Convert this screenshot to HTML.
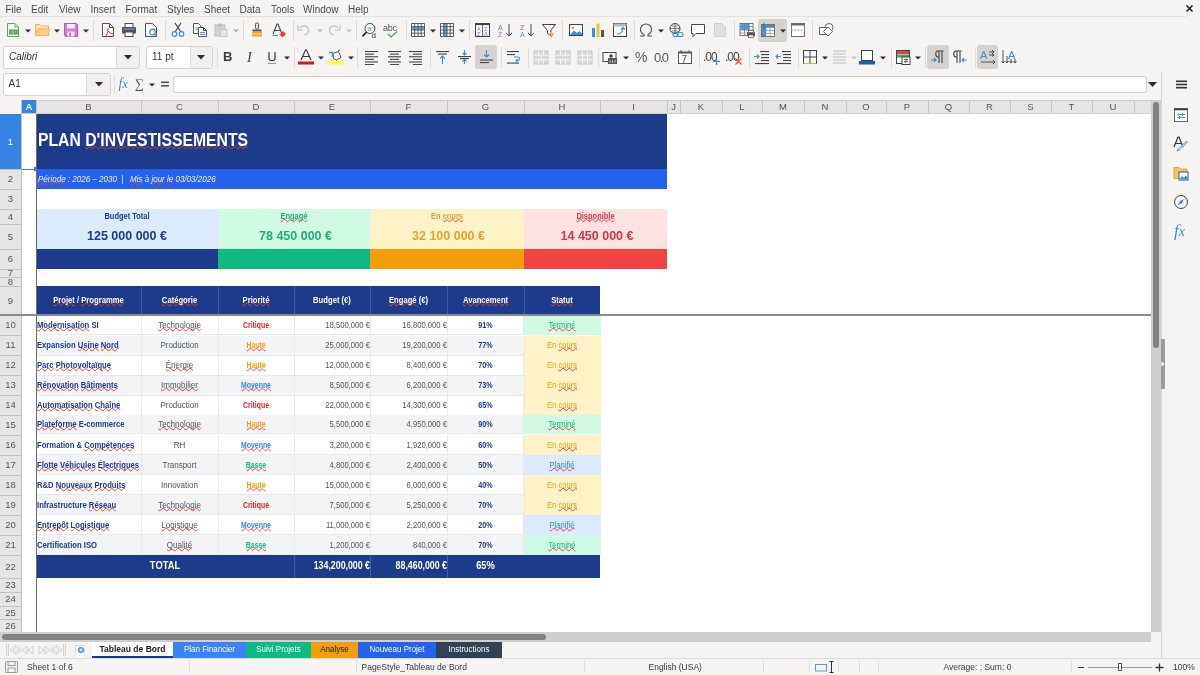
<!DOCTYPE html><html><head><meta charset="utf-8"><style>
html,body{margin:0;padding:0;}
body{width:1200px;height:675px;position:relative;overflow:hidden;background:#f5f4f3;font-family:"Liberation Sans",sans-serif;color:#333;}
div{box-sizing:border-box;}
.mi{position:absolute;top:3px;font-size:10px;color:#4a4a4a;line-height:13px;}
.sep{position:absolute;width:1px;background:#dcdad7;}
.dd{position:absolute;width:0;height:0;border-left:3px solid transparent;border-right:3px solid transparent;border-top:3px solid #2b2b2b;}
.ch{position:absolute;top:100px;height:14px;line-height:14px;font-size:9.5px;color:#505050;text-align:center;border-right:1px solid #c9c8c6;}
.rh{position:absolute;left:0;width:21px;font-size:9.5px;color:#505050;text-align:center;border-bottom:1px solid #c9c8c6;}
.sp{text-decoration-line:underline;text-decoration-style:wavy;text-decoration-color:#e2413e;text-decoration-thickness:1px;text-underline-offset:-0.5px;text-decoration-skip-ink:none;}
.c{position:absolute;white-space:nowrap;overflow:hidden;font-family:"Liberation Sans",sans-serif;}
</style></head><body><div style="position:absolute;left:0;top:0;width:1200px;height:675px;overflow:hidden;will-change:transform">

<div class="mi" style="left:5.5px">File</div>
<div class="mi" style="left:31px">Edit</div>
<div class="mi" style="left:59px">View</div>
<div class="mi" style="left:90.5px">Insert</div>
<div class="mi" style="left:125.5px">Format</div>
<div class="mi" style="left:167px">Styles</div>
<div class="mi" style="left:204px">Sheet</div>
<div class="mi" style="left:239.5px">Data</div>
<div class="mi" style="left:271px">Tools</div>
<div class="mi" style="left:303px">Window</div>
<div class="mi" style="left:348px">Help</div>
<div style="position:absolute;left:0px;top:16px;width:1186px;height:1px;background:#e4e2df"></div>
<svg style="position:absolute;left:1184.5px;top:4px;" width="9" height="9" viewBox="0 0 9 9"><path d="M1.5 1.5L7.5 7.5M7.5 1.5L1.5 7.5" stroke="#222" stroke-width="1.6"/></svg>
<svg style="position:absolute;left:5px;top:22px;" width="16" height="16" viewBox="0 0 16 16"><path d="M2.5 1.5H10L13.5 5V14.5H2.5Z" fill="#fff" stroke="#5aa866"/><path d="M10 1.5V5H13.5" fill="none" stroke="#5aa866"/><rect x="4" y="7.5" width="9" height="5" fill="#4c9e58"/><path d="M4 10H13M8 7.5V12.5" stroke="#b7e0bc" stroke-width="0.7"/></svg>
<svg style="position:absolute;left:24.5px;top:29px;" width="6" height="4" viewBox="0 0 6 4"><path d="M0 0.5H6L3 3.5Z" fill="#2b2b2b"/></svg>
<svg style="position:absolute;left:33.5px;top:22px;" width="16" height="16" viewBox="0 0 16 16"><path d="M1.5 2.5H6L7.5 4H14.5V13.5H1.5Z" fill="#fbe3b3" stroke="#eab06a"/><path d="M1.5 13.5L3.5 7H15.5L14.5 13.5Z" fill="#f8cf80" stroke="#eab06a" stroke-width="0.9"/></svg>
<svg style="position:absolute;left:54px;top:29px;" width="6" height="4" viewBox="0 0 6 4"><path d="M0 0.5H6L3 3.5Z" fill="#2b2b2b"/></svg>
<svg style="position:absolute;left:63px;top:22px;" width="16" height="16" viewBox="0 0 16 16"><path d="M1.5 1.5H13.5L14.5 2.5V14.5H2.5L1.5 13.5Z" fill="#d57ad5" stroke="#b45ab4"/><rect x="4" y="2" width="8" height="4.5" fill="#f8ecf8"/><rect x="4.5" y="9.5" width="7" height="5" fill="#f8ecf8"/><rect x="6.5" y="10.5" width="1.5" height="4" fill="#b45ab4"/></svg>
<svg style="position:absolute;left:83px;top:29px;" width="6" height="4" viewBox="0 0 6 4"><path d="M0 0.5H6L3 3.5Z" fill="#2b2b2b"/></svg>
<div style="position:absolute;left:93px;top:20px;width:1px;height:21px;background:#dedcd9"></div>
<svg style="position:absolute;left:100px;top:22px;" width="16" height="16" viewBox="0 0 16 16"><path d="M2.5 1.5H9.5L13.5 5.5V14.5H2.5Z" fill="#fff" stroke="#555"/><path d="M9.5 1.5V5.5H13.5" fill="none" stroke="#555"/><path d="M6 14C8 10 9 8 8 7C7 8 9 11 13 12" fill="none" stroke="#e0443e" stroke-width="1.1"/></svg>
<svg style="position:absolute;left:121px;top:22px;" width="16" height="16" viewBox="0 0 16 16"><rect x="4" y="1.5" width="8" height="4" fill="#fff" stroke="#4a4a4a"/><rect x="1" y="5" width="14" height="6.5" rx="1" fill="#4a5560"/><rect x="4" y="10" width="8" height="4.5" fill="#fff" stroke="#4a4a4a"/><rect x="2.5" y="6.5" width="11" height="1" fill="#6fa8dc"/></svg>
<svg style="position:absolute;left:143px;top:22px;" width="16" height="16" viewBox="0 0 16 16"><path d="M2.5 1.5H9.5L13.5 5.5V14.5H2.5Z" fill="#fff" stroke="#555"/><circle cx="9.5" cy="10" r="2.8" fill="none" stroke="#3a8fd8" stroke-width="1.2"/><path d="M11.5 12L14 14.5" stroke="#3a8fd8" stroke-width="1.4"/></svg>
<div style="position:absolute;left:164.5px;top:20px;width:1px;height:21px;background:#dedcd9"></div>
<svg style="position:absolute;left:170px;top:22px;" width="16" height="16" viewBox="0 0 16 16"><path d="M5 1L11 10M11 1L5 10" stroke="#444" stroke-width="1.2"/><circle cx="4.5" cy="12" r="2.3" fill="none" stroke="#3a8fd8" stroke-width="1.2"/><circle cx="11.5" cy="12" r="2.3" fill="none" stroke="#3a8fd8" stroke-width="1.2"/></svg>
<svg style="position:absolute;left:192px;top:22px;" width="16" height="16" viewBox="0 0 16 16"><path d="M1.5 1.5H6.5L8.5 3.5V11.5H1.5Z" fill="#fff" stroke="#555"/><path d="M3 6H7M3 8H7" stroke="#3a8fd8" stroke-width="0.8"/><path d="M6.5 5.5H11.5L14.5 8.5V14.5H6.5Z" fill="#fff" stroke="#555"/><path d="M11.5 5.5V8.5H14.5" fill="none" stroke="#555"/><path d="M8 10.5H13M8 12.5H13" stroke="#3a8fd8" stroke-width="0.9"/></svg>
<svg style="position:absolute;left:213px;top:22px;" width="16" height="16" viewBox="0 0 16 16"><rect x="2" y="3" width="10" height="11" fill="#d2d2d2" stroke="#bdbdbd"/><rect x="5" y="1.5" width="4" height="3" fill="#bdbdbd"/><rect x="7.5" y="7.5" width="6.5" height="7" fill="#e6e6e6" stroke="#c4c4c4"/></svg>
<svg style="position:absolute;left:233px;top:29px;" width="6" height="4" viewBox="0 0 6 4"><path d="M0 0.5H6L3 3.5Z" fill="#b0b0b0"/></svg>
<div style="position:absolute;left:243px;top:20px;width:1px;height:21px;background:#dedcd9"></div>
<svg style="position:absolute;left:249px;top:22px;" width="16" height="16" viewBox="0 0 16 16"><rect x="6.5" y="1" width="3" height="6" rx="1.2" fill="none" stroke="#555"/><path d="M3.5 7.5H12.5V9.5H3.5Z" fill="#555"/><path d="M3 9.5H13V14.5H3Z" fill="#f0a23c"/><path d="M3 12H13" stroke="#fff" stroke-width="0.6"/></svg>
<svg style="position:absolute;left:271px;top:22px;" width="16" height="16" viewBox="0 0 16 16"><path d="M2 12L6 2H7L11 12M3.5 8.5H9.5" fill="none" stroke="#444" stroke-width="1.1"/><path d="M1.5 13.5H7" stroke="#3a8fd8"/><path d="M8.5 12.5L12 9L15 12L11.5 15.5Z" fill="#e0443e"/></svg>
<div style="position:absolute;left:292.5px;top:20px;width:1px;height:21px;background:#dedcd9"></div>
<svg style="position:absolute;left:296px;top:22px;" width="16" height="16" viewBox="0 0 16 16"><path d="M4 6C6 3 11 3 12.5 7C13.5 10 11 13 8 13" fill="none" stroke="#c2c2c2" stroke-width="1.2"/><path d="M2 3V8H7" fill="none" stroke="#c2c2c2" stroke-width="1.2"/></svg>
<svg style="position:absolute;left:316.5px;top:29px;" width="6" height="4" viewBox="0 0 6 4"><path d="M0 0.5H6L3 3.5Z" fill="#c2c2c2"/></svg>
<svg style="position:absolute;left:326px;top:22px;" width="16" height="16" viewBox="0 0 16 16"><path d="M12 6C10 3 5 3 3.5 7C2.5 10 5 13 8 13" fill="none" stroke="#c2c2c2" stroke-width="1.2"/><path d="M14 3V8H9" fill="none" stroke="#c2c2c2" stroke-width="1.2"/></svg>
<svg style="position:absolute;left:345.5px;top:29px;" width="6" height="4" viewBox="0 0 6 4"><path d="M0 0.5H6L3 3.5Z" fill="#c2c2c2"/></svg>
<div style="position:absolute;left:356px;top:20px;width:1px;height:21px;background:#dedcd9"></div>
<svg style="position:absolute;left:361px;top:22px;" width="16" height="16" viewBox="0 0 16 16"><circle cx="9" cy="6.5" r="5" fill="#fff" stroke="#444" stroke-width="1"/><path d="M5.5 10L1.5 14.5" stroke="#222" stroke-width="1.7"/><text x="6.3" y="9" font-size="7.5" fill="#3a8fd8" font-family="Liberation Sans">a</text><text x="10.5" y="16" font-size="8" fill="#333" font-family="Liberation Sans">d</text></svg>
<svg style="position:absolute;left:383px;top:22px;" width="18" height="16" viewBox="0 0 18 16"><text x="0" y="8.5" font-size="9" fill="#555" font-family="Liberation Sans" letter-spacing="-0.3">abc</text><path d="M5 12L8 15L14 9.5" fill="none" stroke="#3daa5c" stroke-width="1.2"/></svg>
<div style="position:absolute;left:405.5px;top:20px;width:1px;height:21px;background:#dedcd9"></div>
<svg style="position:absolute;left:410px;top:22px;" width="16" height="16" viewBox="0 0 16 16"><rect x="1.5" y="1.5" width="13" height="13" fill="#fff"/><rect x="1.5" y="4.7" width="13" height="3.3" fill="#5ab0f0"/><path d="M1.5 1.5H14.5V14.5H1.5ZM1.5 4.7H14.5M1.5 8H14.5M1.5 11.2H14.5M4.7 1.5V14.5M8 1.5V14.5M11.2 1.5V14.5" fill="none" stroke="#4a4a4a" stroke-width="0.9"/></svg>
<svg style="position:absolute;left:429.5px;top:29px;" width="6" height="4" viewBox="0 0 6 4"><path d="M0 0.5H6L3 3.5Z" fill="#2b2b2b"/></svg>
<svg style="position:absolute;left:439px;top:22px;" width="16" height="16" viewBox="0 0 16 16"><rect x="1.5" y="1.5" width="13" height="13" fill="#fff"/><rect x="4.7" y="1.5" width="3.3" height="13" fill="#5ab0f0"/><path d="M1.5 1.5H14.5V14.5H1.5ZM1.5 4.7H14.5M1.5 8H14.5M1.5 11.2H14.5M4.7 1.5V14.5M8 1.5V14.5M11.2 1.5V14.5" fill="none" stroke="#4a4a4a" stroke-width="0.9"/></svg>
<svg style="position:absolute;left:459px;top:29px;" width="6" height="4" viewBox="0 0 6 4"><path d="M0 0.5H6L3 3.5Z" fill="#2b2b2b"/></svg>
<div style="position:absolute;left:469px;top:20px;width:1px;height:21px;background:#dedcd9"></div>
<svg style="position:absolute;left:474px;top:22px;" width="16" height="16" viewBox="0 0 16 16"><rect x="1.5" y="1.5" width="14" height="13" fill="#fff" stroke="#444"/><rect x="1.5" y="1.5" width="14" height="1.6" fill="#444"/><path d="M8.5 3V14.5" stroke="#444" stroke-width="0.8"/><text x="3" y="8.5" font-size="5.5" fill="#3a8fd8" font-family="Liberation Sans">A</text><text x="3" y="14" font-size="5.5" fill="#c44fc4" font-family="Liberation Sans">Z</text><text x="10" y="8.5" font-size="5.5" fill="#c44fc4" font-family="Liberation Sans">Z</text><text x="10" y="14" font-size="5.5" fill="#3a8fd8" font-family="Liberation Sans">A</text></svg>
<svg style="position:absolute;left:497px;top:22px;" width="16" height="16" viewBox="0 0 16 16"><text x="1" y="7.5" font-size="7" fill="#3a8fd8" font-family="Liberation Sans">A</text><text x="1" y="15" font-size="7" fill="#c44fc4" font-family="Liberation Sans">Z</text><path d="M12 2V14M9 11L12 14L15 11" fill="none" stroke="#444" stroke-width="1"/></svg>
<svg style="position:absolute;left:519px;top:22px;" width="16" height="16" viewBox="0 0 16 16"><text x="1" y="7.5" font-size="7" fill="#c44fc4" font-family="Liberation Sans">Z</text><text x="1" y="15" font-size="7" fill="#3a8fd8" font-family="Liberation Sans">A</text><path d="M12 2V14M9 11L12 14L15 11" fill="none" stroke="#444" stroke-width="1"/></svg>
<svg style="position:absolute;left:541px;top:22px;" width="16" height="16" viewBox="0 0 16 16"><path d="M1.5 2.5H14.5L9.5 8.5V13.5L6.5 11.5V8.5Z" fill="#fff" stroke="#444"/><path d="M11 8L9 12H12L10 15.5" fill="none" stroke="#f0a23c" stroke-width="1.4"/></svg>
<div style="position:absolute;left:562px;top:20px;width:1px;height:21px;background:#dedcd9"></div>
<svg style="position:absolute;left:568px;top:22px;" width="16" height="16" viewBox="0 0 16 16"><rect x="1.5" y="2.5" width="13" height="11" fill="#fff" stroke="#444"/><circle cx="5" cy="6" r="1.3" fill="#f0a23c"/><path d="M2 13L6 8.5L9 11L11.5 9L14 11.5V13Z" fill="#3a8fd8"/></svg>
<svg style="position:absolute;left:590px;top:22px;" width="16" height="16" viewBox="0 0 16 16"><rect x="2" y="6" width="3" height="9" fill="#3a8fd8"/><rect x="6.5" y="1.5" width="3" height="13.5" fill="#f0c23c"/><rect x="11" y="8" width="3" height="7" fill="#555"/></svg>
<svg style="position:absolute;left:612px;top:22px;" width="16" height="16" viewBox="0 0 16 16"><rect x="1.5" y="1.5" width="13" height="13" fill="#fff" stroke="#444"/><rect x="1.5" y="1.5" width="13" height="3" fill="#bbb"/><path d="M5 12C8 12 11 10 11 6M9 7.5L11 5.5L13 7.5" fill="none" stroke="#3a8fd8" stroke-width="1.1"/></svg>
<div style="position:absolute;left:633.5px;top:20px;width:1px;height:21px;background:#dedcd9"></div>
<svg style="position:absolute;left:638px;top:22px;" width="16" height="16" viewBox="0 0 16 16"><path d="M2 14H6V12.5C3.5 11.5 2.5 9.5 2.5 7.5C2.5 4.5 5 2 8 2C11 2 13.5 4.5 13.5 7.5C13.5 9.5 12.5 11.5 10 12.5V14H14" fill="none" stroke="#444" stroke-width="1.1"/></svg>
<svg style="position:absolute;left:658px;top:29px;" width="6" height="4" viewBox="0 0 6 4"><path d="M0 0.5H6L3 3.5Z" fill="#2b2b2b"/></svg>
<svg style="position:absolute;left:668px;top:22px;" width="16" height="16" viewBox="0 0 16 16"><circle cx="7" cy="6.5" r="5" fill="#fff" stroke="#444"/><path d="M2 6.5H12M7 1.5V11.5M3.5 3.5C5 4.5 9 4.5 10.5 3.5M3.5 9.5C5 8.5 9 8.5 10.5 9.5" fill="none" stroke="#444" stroke-width="0.7"/><rect x="5" y="10.5" width="5" height="4" rx="2" fill="none" stroke="#3a8fd8" stroke-width="1.1"/><rect x="9.5" y="10.5" width="5.5" height="4" rx="2" fill="none" stroke="#3a8fd8" stroke-width="1.1"/></svg>
<svg style="position:absolute;left:690px;top:22px;" width="16" height="16" viewBox="0 0 16 16"><path d="M1.5 2.5H14.5V11.5H6L3 14.5V11.5H1.5Z" fill="#fff" stroke="#444"/></svg>
<svg style="position:absolute;left:712px;top:22px;" width="16" height="16" viewBox="0 0 16 16"><path d="M2.5 1.5H10L13.5 5V14.5H2.5Z" fill="#e0e0e0" stroke="#cfcfcf"/></svg>
<div style="position:absolute;left:734px;top:20px;width:1px;height:21px;background:#dedcd9"></div>
<svg style="position:absolute;left:739px;top:22px;" width="16" height="16" viewBox="0 0 16 16"><rect x="1" y="1.5" width="13" height="12" fill="#fff" stroke="#666" stroke-width="0.9"/><rect x="1.5" y="2" width="9" height="6" fill="#4a9fe8"/><path d="M1 4.5H14M1 8H14M1 11H14M5.5 1.5V13.5M10 1.5V13.5" stroke="#777" stroke-width="0.7"/><rect x="8" y="10" width="8" height="4.5" rx="1" fill="#555"/><rect x="9.5" y="8.5" width="5" height="2" fill="#fff" stroke="#555" stroke-width="0.7"/><rect x="9.5" y="13" width="5" height="2.5" fill="#fff" stroke="#555" stroke-width="0.7"/></svg>
<div style="position:absolute;left:758px;top:19px;width:29px;height:23px;background:#d6d3cf;border-radius:3px"></div>
<svg style="position:absolute;left:760px;top:22px;" width="16" height="16" viewBox="0 0 16 16"><rect x="1.5" y="2.5" width="13" height="12" fill="#fff" stroke="#666" stroke-width="0.9"/><rect x="2" y="3" width="4" height="11" fill="#3a8fd8"/><rect x="2" y="3" width="12" height="2.5" fill="#3a8fd8"/><path d="M1.5 5.5H14.5M1.5 8.5H14.5M1.5 11.5H14.5M6 2.5V14.5M10 2.5V14.5" stroke="#888" stroke-width="0.7"/><path d="M4 0.5V6M2.5 4.5L4 6L5.5 4.5" fill="none" stroke="#2a6fb8" stroke-width="0.9"/></svg>
<svg style="position:absolute;left:780px;top:29px;" width="6" height="4" viewBox="0 0 6 4"><path d="M0 0.5H6L3 3.5Z" fill="#2b2b2b"/></svg>
<svg style="position:absolute;left:790px;top:22px;" width="16" height="16" viewBox="0 0 16 16"><rect x="1.5" y="1.5" width="13" height="13" fill="#fff" stroke="#666" stroke-width="0.9"/><rect x="1.5" y="1.5" width="13" height="2" fill="#666"/><path d="M1 8H15" stroke="#4aa0e0" stroke-width="0.9" stroke-dasharray="2 1.2"/></svg>
<div style="position:absolute;left:812px;top:20px;width:1px;height:21px;background:#dedcd9"></div>
<svg style="position:absolute;left:818px;top:22px;" width="16" height="16" viewBox="0 0 16 16"><circle cx="11" cy="5.5" r="4" fill="#fff" stroke="#555" stroke-width="0.9"/><path d="M1.5 5.5H8.5V12.5H1.5Z" fill="#fff" stroke="#555" stroke-width="0.9"/><path d="M5.5 9.5L10 5L14.5 9.5L10 14Z" fill="#fff" stroke="#555" stroke-width="0.9"/></svg>
<div style="position:absolute;left:3px;top:45.5px;width:137px;height:23px;background:#fff;border:1px solid #d5d3d0;border-radius:3px"></div>
<div style="position:absolute;left:116px;top:46.5px;width:23px;height:21px;background:#f1f0ee;border-left:1px solid #dedcd9;border-radius:0 2px 2px 0"></div>
<svg style="position:absolute;left:124px;top:55px;" width="8" height="5" viewBox="0 0 8 5"><path d="M0 0H8L4 4.5Z" fill="#2b2b2b"/></svg>
<div style="position:absolute;left:9px;top:50px;white-space:nowrap;font-size:10px;font-style:italic;color:#333;line-height:14px;">Calibri</div>
<div style="position:absolute;left:146px;top:45.5px;width:67px;height:23px;background:#fff;border:1px solid #d5d3d0;border-radius:3px"></div>
<div style="position:absolute;left:190px;top:46.5px;width:22px;height:21px;background:#f1f0ee;border-left:1px solid #dedcd9;border-radius:0 2px 2px 0"></div>
<svg style="position:absolute;left:197px;top:55px;" width="8" height="5" viewBox="0 0 8 5"><path d="M0 0H8L4 4.5Z" fill="#2b2b2b"/></svg>
<div style="position:absolute;left:152px;top:50px;white-space:nowrap;font-size:10px;color:#333;line-height:14px;">11 pt</div>
<div style="position:absolute;left:217px;top:47px;width:1px;height:21px;background:#dedcd9"></div>
<div style="position:absolute;left:223px;top:49px;white-space:nowrap;font-size:13px;font-weight:bold;color:#3a3a3a;line-height:16px;">B</div>
<div style="position:absolute;left:247px;top:48px;white-space:nowrap;font-size:14.5px;font-style:italic;color:#444;line-height:18px;font-family:Liberation Serif;">I</div>
<svg style="position:absolute;left:266px;top:49px;" width="12" height="16" viewBox="0 0 12 16"><path d="M3 3V9.5C3 12.3 9 12.3 9 9.5V3" fill="none" stroke="#3a3a3a" stroke-width="1.2"/><path d="M2 14.5H10" stroke="#6aa8e0" stroke-width="1.2"/></svg>
<svg style="position:absolute;left:284px;top:56px;" width="6" height="4" viewBox="0 0 6 4"><path d="M0 0.5H6L3 3.5Z" fill="#2b2b2b"/></svg>
<div style="position:absolute;left:294px;top:47px;width:1px;height:21px;background:#dedcd9"></div>
<svg style="position:absolute;left:298px;top:49px;" width="16" height="16" viewBox="0 0 16 16"><path d="M3 11L7.5 1H8.5L13 11M4.8 7.5H11.2" fill="none" stroke="#3a3a3a" stroke-width="1.2"/><rect x="0" y="12.5" width="16" height="3" fill="#c9211e"/></svg>
<svg style="position:absolute;left:318px;top:56px;" width="6" height="4" viewBox="0 0 6 4"><path d="M0 0.5H6L3 3.5Z" fill="#2b2b2b"/></svg>
<svg style="position:absolute;left:327px;top:49px;" width="16" height="16" viewBox="0 0 16 16"><path d="M6 4.5L11.5 2.5L14 8.5L9.5 11L6.5 9.5Z" fill="#fff" stroke="#444" stroke-width="0.9"/><path d="M11 2.5C11 1 12.5 0.5 13 2" fill="none" stroke="#444" stroke-width="0.8"/><path d="M2 3.5H5.5V8" fill="none" stroke="#3a8fd8" stroke-width="1.6"/><rect x="0" y="12" width="16" height="3.5" fill="#ffff38"/></svg>
<svg style="position:absolute;left:347.5px;top:56px;" width="6" height="4" viewBox="0 0 6 4"><path d="M0 0.5H6L3 3.5Z" fill="#2b2b2b"/></svg>
<div style="position:absolute;left:357px;top:47px;width:1px;height:21px;background:#dedcd9"></div>
<svg style="position:absolute;left:364px;top:49px;" width="16" height="16" viewBox="0 0 16 16"><rect x="1" y="2.0" width="13" height="1.1" fill="#444"/><rect x="1" y="4.6" width="9" height="1.1" fill="#444"/><rect x="1" y="7.2" width="13" height="1.1" fill="#444"/><rect x="1" y="9.8" width="9" height="1.1" fill="#444"/><rect x="1" y="12.4" width="13" height="1.1" fill="#444"/><rect x="1" y="15.0" width="9" height="1.1" fill="#444"/></svg>
<svg style="position:absolute;left:386.5px;top:49px;" width="16" height="16" viewBox="0 0 16 16"><rect x="1" y="2.0" width="13" height="1.1" fill="#444"/><rect x="3" y="4.6" width="9" height="1.1" fill="#444"/><rect x="1" y="7.2" width="13" height="1.1" fill="#444"/><rect x="3" y="9.8" width="9" height="1.1" fill="#444"/><rect x="1" y="12.4" width="13" height="1.1" fill="#444"/><rect x="3" y="15.0" width="9" height="1.1" fill="#444"/></svg>
<svg style="position:absolute;left:408px;top:49px;" width="16" height="16" viewBox="0 0 16 16"><rect x="1" y="2.0" width="13" height="1.1" fill="#444"/><rect x="5" y="4.6" width="9" height="1.1" fill="#444"/><rect x="1" y="7.2" width="13" height="1.1" fill="#444"/><rect x="5" y="9.8" width="9" height="1.1" fill="#444"/><rect x="1" y="12.4" width="13" height="1.1" fill="#444"/><rect x="5" y="15.0" width="9" height="1.1" fill="#444"/></svg>
<div style="position:absolute;left:430px;top:47px;width:1px;height:21px;background:#dedcd9"></div>
<svg style="position:absolute;left:435px;top:49px;" width="16" height="16" viewBox="0 0 16 16"><rect x="1" y="2" width="13" height="1.1" fill="#444"/><rect x="3" y="4.5" width="9" height="1.1" fill="#444"/><path d="M7.5 15V7M5 9.5L7.5 7L10 9.5" fill="none" stroke="#3a8fd8" stroke-width="1.1"/></svg>
<svg style="position:absolute;left:457px;top:49px;" width="16" height="16" viewBox="0 0 16 16"><rect x="1" y="7" width="13" height="1.1" fill="#444"/><rect x="3" y="9" width="9" height="1.1" fill="#444"/><path d="M7.5 1V6M5.5 4L7.5 6L9.5 4M7.5 15V10.5M5.5 12.5L7.5 10.5L9.5 12.5" fill="none" stroke="#3a8fd8" stroke-width="1.1"/></svg>
<div style="position:absolute;left:475px;top:45px;width:22px;height:24px;background:#d6d3cf;border-radius:3px"></div>
<svg style="position:absolute;left:479px;top:49px;" width="16" height="16" viewBox="0 0 16 16"><path d="M7.5 1V8M5 5.5L7.5 8L10 5.5" fill="none" stroke="#3a8fd8" stroke-width="1.1"/><rect x="1" y="10.5" width="13" height="1.1" fill="#444"/><rect x="1" y="13" width="9" height="1.1" fill="#444"/></svg>
<div style="position:absolute;left:500.5px;top:47px;width:1px;height:21px;background:#dedcd9"></div>
<svg style="position:absolute;left:506px;top:49px;" width="16" height="16" viewBox="0 0 16 16"><rect x="1" y="2" width="12" height="1.1" fill="#444"/><rect x="1" y="5" width="8" height="1.1" fill="#444"/><rect x="1" y="13.5" width="12" height="1.1" fill="#444"/><path d="M8 8H12C14 8 14 11.5 12 11.5H10M11.5 10L10 11.5L11.5 13" fill="none" stroke="#3a8fd8" stroke-width="1.1"/></svg>
<div style="position:absolute;left:528px;top:47px;width:1px;height:21px;background:#dedcd9"></div>
<svg style="position:absolute;left:533px;top:49px;" width="16" height="16" viewBox="0 0 16 16"><rect x="1" y="2" width="14" height="13" fill="#dadada" stroke="#c6c6c6"/><path d="M1 6.3H15M1 10.6H15" stroke="#f6f6f6" stroke-width="1"/><path d="M5.5 2V6.3M10.5 2V6.3M5.5 10.6V15M10.5 10.6V15M8 6.3V10.6" stroke="#f6f6f6"/></svg>
<svg style="position:absolute;left:555px;top:49px;" width="16" height="16" viewBox="0 0 16 16"><rect x="1" y="2" width="14" height="13" fill="#dadada" stroke="#c6c6c6"/><path d="M1 6.3H15M1 10.6H15" stroke="#f6f6f6" stroke-width="1"/><path d="M5.5 2V6.3M10.5 2V6.3M5.5 10.6V15M10.5 10.6V15" stroke="#f6f6f6"/></svg>
<svg style="position:absolute;left:577px;top:49px;" width="16" height="16" viewBox="0 0 16 16"><rect x="1" y="2" width="14" height="13" fill="#dadada" stroke="#c6c6c6"/><path d="M1 6.3H15M1 10.6H15" stroke="#f6f6f6" stroke-width="1"/><path d="M5.5 2V15M10.5 2V15" stroke="#f6f6f6"/></svg>
<div style="position:absolute;left:598px;top:47px;width:1px;height:21px;background:#dedcd9"></div>
<svg style="position:absolute;left:602px;top:49px;" width="16" height="16" viewBox="0 0 16 16"><rect x="1" y="3.5" width="13" height="9" fill="#fff" stroke="#444"/><circle cx="9" cy="7" r="1.8" fill="#444"/><rect x="6" y="9" width="9" height="6" fill="#555"/><path d="M8 11V14M10.5 11V14M13 11V14" stroke="#ddd" stroke-width="0.8"/></svg>
<svg style="position:absolute;left:623px;top:56px;" width="6" height="4" viewBox="0 0 6 4"><path d="M0 0.5H6L3 3.5Z" fill="#2b2b2b"/></svg>
<div style="position:absolute;left:635px;top:48px;white-space:nowrap;font-size:14px;color:#5a5a5a;line-height:18px;">%</div>
<div style="position:absolute;left:654px;top:48.5px;white-space:nowrap;font-size:13px;color:#5a5a5a;line-height:17px;letter-spacing:-1.5px;">0.0</div>
<svg style="position:absolute;left:677px;top:49px;" width="16" height="16" viewBox="0 0 16 16"><rect x="1.5" y="3" width="13" height="11.5" fill="#fff" stroke="#555"/><rect x="1.5" y="3" width="13" height="1.5" fill="#555"/><path d="M4 1V4M12 1V4" stroke="#555"/><text x="4.5" y="13.5" font-size="10" fill="#555" font-family="Liberation Sans">7</text></svg>
<div style="position:absolute;left:699px;top:47px;width:1px;height:21px;background:#dedcd9"></div>
<div style="position:absolute;left:703px;top:49px;white-space:nowrap;font-size:12px;color:#444;line-height:16px;letter-spacing:-1px;">.00</div>
<svg style="position:absolute;left:712px;top:57px;" width="9" height="9" viewBox="0 0 9 9"><path d="M4.5 1V8M1 4.5H8" stroke="#3a8fd8" stroke-width="1.2"/></svg>
<div style="position:absolute;left:725px;top:49px;white-space:nowrap;font-size:12px;color:#444;line-height:16px;letter-spacing:-1px;">.00</div>
<svg style="position:absolute;left:734px;top:57px;" width="9" height="9" viewBox="0 0 9 9"><path d="M1.5 1.5L7.5 7.5M7.5 1.5L1.5 7.5" stroke="#e0443e" stroke-width="1.1"/></svg>
<div style="position:absolute;left:748.5px;top:47px;width:1px;height:21px;background:#dedcd9"></div>
<svg style="position:absolute;left:753px;top:49px;" width="16" height="16" viewBox="0 0 16 16"><rect x="7" y="2" width="9" height="1.1" fill="#444"/><rect x="8" y="5" width="8" height="1.1" fill="#444"/><rect x="8" y="8" width="8" height="1.1" fill="#444"/><rect x="8" y="11" width="8" height="1.1" fill="#444"/><rect x="2" y="14" width="14" height="1.1" fill="#444"/><path d="M1 7.5H6M4 5.5L6 7.5L4 9.5" fill="none" stroke="#3a8fd8" stroke-width="1.1"/></svg>
<svg style="position:absolute;left:775px;top:49px;" width="16" height="16" viewBox="0 0 16 16"><rect x="7" y="2" width="9" height="1.1" fill="#444"/><rect x="8" y="5" width="8" height="1.1" fill="#444"/><rect x="8" y="8" width="8" height="1.1" fill="#444"/><rect x="8" y="11" width="8" height="1.1" fill="#444"/><rect x="2" y="14" width="14" height="1.1" fill="#444"/><path d="M1 7.5H6M3 5.5L1 7.5L3 9.5" fill="none" stroke="#3a8fd8" stroke-width="1.1"/></svg>
<div style="position:absolute;left:798px;top:47px;width:1px;height:21px;background:#dedcd9"></div>
<svg style="position:absolute;left:802px;top:49px;" width="16" height="16" viewBox="0 0 16 16"><rect x="1.5" y="1.5" width="13" height="13" fill="#fff" stroke="#444"/><path d="M8 1.5V14.5M1.5 8H14.5" stroke="#444"/><path d="M1.5 14.5H14.5" stroke="#f0a23c"/></svg>
<svg style="position:absolute;left:822px;top:56px;" width="6" height="4" viewBox="0 0 6 4"><path d="M0 0.5H6L3 3.5Z" fill="#2b2b2b"/></svg>
<svg style="position:absolute;left:832px;top:49px;" width="16" height="16" viewBox="0 0 16 16"><path d="M1 2H14M1 5H14M1 8H14M1 11H14M1 14H14" stroke="#bbb" stroke-width="1.2"/></svg>
<svg style="position:absolute;left:851px;top:56px;" width="6" height="4" viewBox="0 0 6 4"><path d="M0 0.5H6L3 3.5Z" fill="#c2c2c2"/></svg>
<svg style="position:absolute;left:859px;top:49px;" width="16" height="16" viewBox="0 0 16 16"><rect x="2.5" y="1.5" width="11" height="10" fill="#fff" stroke="#444"/><rect x="0" y="12" width="16" height="3.5" fill="#1e60b0"/></svg>
<svg style="position:absolute;left:880px;top:56px;" width="6" height="4" viewBox="0 0 6 4"><path d="M0 0.5H6L3 3.5Z" fill="#2b2b2b"/></svg>
<div style="position:absolute;left:891px;top:47px;width:1px;height:21px;background:#dedcd9"></div>
<svg style="position:absolute;left:895px;top:49px;" width="16" height="16" viewBox="0 0 16 16"><rect x="1.5" y="1.5" width="13" height="13" fill="#fff" stroke="#444"/><rect x="2" y="2" width="12" height="3" fill="#e0443e"/><rect x="2" y="5.5" width="12" height="3" fill="#3daa5c"/><rect x="7" y="8" width="8" height="7.5" fill="#fff" stroke="#444"/><path d="M9 10.5H13M9 12.5H13M12 9.5L10 14" stroke="#444" stroke-width="0.8"/></svg>
<svg style="position:absolute;left:915px;top:56px;" width="6" height="4" viewBox="0 0 6 4"><path d="M0 0.5H6L3 3.5Z" fill="#2b2b2b"/></svg>
<div style="position:absolute;left:925px;top:47px;width:1px;height:21px;background:#dedcd9"></div>
<div style="position:absolute;left:927px;top:45px;width:22px;height:24px;background:#d6d3cf;border-radius:3px"></div>
<svg style="position:absolute;left:930px;top:49px;" width="16" height="16" viewBox="0 0 16 16"><path d="M9 14V2M12 14V2M13.5 2H8C5 2 5 8 8 8H9" fill="none" stroke="#444" stroke-width="1.1"/><path d="M1 11H6M4 9L6 11L4 13" fill="none" stroke="#3a8fd8" stroke-width="1.1"/></svg>
<svg style="position:absolute;left:952px;top:49px;" width="16" height="16" viewBox="0 0 16 16"><path d="M5 14V2M8 14V2M9.5 2H4C1 2 1 8 4 8H5" fill="none" stroke="#444" stroke-width="1.1"/><path d="M10 11H15M12 9L10 11L12 13" fill="none" stroke="#3a8fd8" stroke-width="1.1"/></svg>
<div style="position:absolute;left:974.5px;top:47px;width:1px;height:21px;background:#dedcd9"></div>
<div style="position:absolute;left:977px;top:45px;width:21px;height:24px;background:#d6d3cf;border-radius:3px"></div>
<svg style="position:absolute;left:980px;top:49px;" width="16" height="16" viewBox="0 0 16 16"><text x="0" y="10" font-size="11" fill="#3a8fd8" font-family="Liberation Sans">A</text><path d="M9 3H14M12 1L14 3L12 5M9 6H14M12 4.5L14 6L12 7.5M1 13H15M13 11L15 13L13 15" fill="none" stroke="#444" stroke-width="0.9"/></svg>
<svg style="position:absolute;left:1001px;top:49px;" width="16" height="16" viewBox="0 0 16 16"><text x="7" y="10" font-size="11" fill="#3a8fd8" font-family="Liberation Sans">A</text><path d="M2 1V14M0.5 12L2 14L3.5 12M6 7V14M4.5 12L6 14L7.5 12M10 10V14M8.5 12L10 14L11.5 12M14 10V14M12.5 12L14 14L15.5 12" fill="none" stroke="#444" stroke-width="0.9"/></svg>
<div style="position:absolute;left:3px;top:72.5px;width:108px;height:23px;background:#fff;border:1px solid #d5d3d0;border-radius:3px"></div>
<div style="position:absolute;left:86px;top:73.5px;width:24px;height:21px;background:#f1f0ee;border-left:1px solid #dedcd9;border-radius:0 2px 2px 0"></div>
<svg style="position:absolute;left:94.5px;top:82px;" width="8" height="5" viewBox="0 0 8 5"><path d="M0 0H8L4 4.5Z" fill="#2b2b2b"/></svg>
<div style="position:absolute;left:8.5px;top:77px;white-space:nowrap;font-size:10px;color:#333;line-height:14px;">A1</div>
<div style="position:absolute;left:113.5px;top:74px;width:1px;height:20px;background:#dedcd9"></div>
<div style="position:absolute;left:118.5px;top:75px;white-space:nowrap;font-size:14px;color:#3a8fd8;line-height:18px;font-family:Liberation Serif;letter-spacing:0px;"><i>f</i><i style="font-size:12px">x</i></div>
<div style="position:absolute;left:135px;top:75px;white-space:nowrap;font-size:13px;color:#555;line-height:18px;font-family:Liberation Serif;">∑</div>
<svg style="position:absolute;left:149px;top:83px;" width="6" height="4" viewBox="0 0 6 4"><path d="M0 0.5H6L3 3.5Z" fill="#2b2b2b"/></svg>
<svg style="position:absolute;left:160px;top:80px;" width="10" height="8" viewBox="0 0 10 8"><rect x="1" y="1.5" width="8" height="1.6" fill="#555"/><rect x="1" y="5" width="8" height="1.6" fill="#555"/></svg>
<div style="position:absolute;left:173px;top:76px;width:974px;height:17px;background:#fff;border:1px solid #d3d1ce;border-radius:2px"></div>
<svg style="position:absolute;left:1148px;top:82px;" width="9" height="5" viewBox="0 0 9 5"><path d="M0 0H9L4.5 5Z" fill="#2b2b2b"/></svg>
<div style="position:absolute;left:21px;top:114px;width:1131px;height:518px;background:#fff"></div>
<div style="position:absolute;left:0px;top:100px;width:1151px;height:14px;background:#e6e5e3;border-top:1px solid #cfcdca"></div>
<div style="position:absolute;left:22px;top:100px;width:14px;height:14px;background:#3584e4"></div>
<div class="ch" style="left:22px;width:14px;color:#fff;font-weight:bold;border:none">A</div>
<div style="position:absolute;left:36px;top:101px;width:1px;height:13px;background:#c4c3c1"></div>
<div class="ch" style="left:36px;width:105px;color:#555;font-weight:normal;border:none">B</div>
<div style="position:absolute;left:141px;top:101px;width:1px;height:13px;background:#c4c3c1"></div>
<div class="ch" style="left:141px;width:77px;color:#555;font-weight:normal;border:none">C</div>
<div style="position:absolute;left:218px;top:101px;width:1px;height:13px;background:#c4c3c1"></div>
<div class="ch" style="left:218px;width:76px;color:#555;font-weight:normal;border:none">D</div>
<div style="position:absolute;left:294px;top:101px;width:1px;height:13px;background:#c4c3c1"></div>
<div class="ch" style="left:294px;width:76px;color:#555;font-weight:normal;border:none">E</div>
<div style="position:absolute;left:370px;top:101px;width:1px;height:13px;background:#c4c3c1"></div>
<div class="ch" style="left:370px;width:77px;color:#555;font-weight:normal;border:none">F</div>
<div style="position:absolute;left:447px;top:101px;width:1px;height:13px;background:#c4c3c1"></div>
<div class="ch" style="left:447px;width:77px;color:#555;font-weight:normal;border:none">G</div>
<div style="position:absolute;left:524px;top:101px;width:1px;height:13px;background:#c4c3c1"></div>
<div class="ch" style="left:524px;width:76px;color:#555;font-weight:normal;border:none">H</div>
<div style="position:absolute;left:600px;top:101px;width:1px;height:13px;background:#c4c3c1"></div>
<div class="ch" style="left:600px;width:67px;color:#555;font-weight:normal;border:none">I</div>
<div style="position:absolute;left:667px;top:101px;width:1px;height:13px;background:#c4c3c1"></div>
<div class="ch" style="left:667px;width:13px;color:#555;font-weight:normal;border:none">J</div>
<div style="position:absolute;left:680px;top:101px;width:1px;height:13px;background:#c4c3c1"></div>
<div class="ch" style="left:680px;width:42px;color:#555;font-weight:normal;border:none">K</div>
<div style="position:absolute;left:722px;top:101px;width:1px;height:13px;background:#c4c3c1"></div>
<div class="ch" style="left:722px;width:40px;color:#555;font-weight:normal;border:none">L</div>
<div style="position:absolute;left:762px;top:101px;width:1px;height:13px;background:#c4c3c1"></div>
<div class="ch" style="left:762px;width:42px;color:#555;font-weight:normal;border:none">M</div>
<div style="position:absolute;left:804px;top:101px;width:1px;height:13px;background:#c4c3c1"></div>
<div class="ch" style="left:804px;width:42px;color:#555;font-weight:normal;border:none">N</div>
<div style="position:absolute;left:846px;top:101px;width:1px;height:13px;background:#c4c3c1"></div>
<div class="ch" style="left:846px;width:40px;color:#555;font-weight:normal;border:none">O</div>
<div style="position:absolute;left:886px;top:101px;width:1px;height:13px;background:#c4c3c1"></div>
<div class="ch" style="left:886px;width:42px;color:#555;font-weight:normal;border:none">P</div>
<div style="position:absolute;left:928px;top:101px;width:1px;height:13px;background:#c4c3c1"></div>
<div class="ch" style="left:928px;width:41px;color:#555;font-weight:normal;border:none">Q</div>
<div style="position:absolute;left:969px;top:101px;width:1px;height:13px;background:#c4c3c1"></div>
<div class="ch" style="left:969px;width:41px;color:#555;font-weight:normal;border:none">R</div>
<div style="position:absolute;left:1010px;top:101px;width:1px;height:13px;background:#c4c3c1"></div>
<div class="ch" style="left:1010px;width:41px;color:#555;font-weight:normal;border:none">S</div>
<div style="position:absolute;left:1051px;top:101px;width:1px;height:13px;background:#c4c3c1"></div>
<div class="ch" style="left:1051px;width:41px;color:#555;font-weight:normal;border:none">T</div>
<div style="position:absolute;left:1092px;top:101px;width:1px;height:13px;background:#c4c3c1"></div>
<div class="ch" style="left:1092px;width:42px;color:#555;font-weight:normal;border:none">U</div>
<div style="position:absolute;left:1134px;top:101px;width:1px;height:13px;background:#c4c3c1"></div>
<div style="position:absolute;left:0px;top:113px;width:1151px;height:1px;background:#d0cfcd"></div>
<div style="position:absolute;left:0px;top:100px;width:21px;height:14px;background:#f5f4f3"></div>
<div style="position:absolute;left:22px;top:168.5px;width:12px;height:1px;background:#3584e4"></div>
<div style="position:absolute;left:34px;top:167px;width:3px;height:4px;background:#3584e4"></div>
<div style="position:absolute;left:0px;top:114px;width:21px;height:518px;background:#e6e5e3"></div>
<div style="position:absolute;left:0px;top:114px;width:21px;height:55px;background:#3584e4"></div>
<div class="rh" style="top:114px;height:55px;line-height:55px;color:#fff;border:none">1</div>
<div style="position:absolute;left:0px;top:169px;width:21px;height:1px;background:#c4c3c1"></div>
<div class="rh" style="top:169px;height:20px;line-height:20px;color:#555;border:none">2</div>
<div style="position:absolute;left:0px;top:189px;width:21px;height:1px;background:#c4c3c1"></div>
<div class="rh" style="top:189px;height:20px;line-height:20px;color:#555;border:none">3</div>
<div style="position:absolute;left:0px;top:209px;width:21px;height:1px;background:#c4c3c1"></div>
<div class="rh" style="top:209px;height:15px;line-height:15px;color:#555;border:none">4</div>
<div style="position:absolute;left:0px;top:224px;width:21px;height:1px;background:#c4c3c1"></div>
<div class="rh" style="top:224px;height:25px;line-height:25px;color:#555;border:none">5</div>
<div style="position:absolute;left:0px;top:249px;width:21px;height:1px;background:#c4c3c1"></div>
<div class="rh" style="top:249px;height:20px;line-height:20px;color:#555;border:none">6</div>
<div style="position:absolute;left:0px;top:269px;width:21px;height:1px;background:#c4c3c1"></div>
<div class="rh" style="top:269px;height:8px;line-height:8px;color:#555;border:none">7</div>
<div style="position:absolute;left:0px;top:277px;width:21px;height:1px;background:#c4c3c1"></div>
<div class="rh" style="top:277px;height:9px;line-height:9px;color:#555;border:none">8</div>
<div style="position:absolute;left:0px;top:286px;width:21px;height:1px;background:#c4c3c1"></div>
<div class="rh" style="top:286px;height:29px;line-height:29px;color:#555;border:none">9</div>
<div style="position:absolute;left:0px;top:315px;width:21px;height:1px;background:#c4c3c1"></div>
<div class="rh" style="top:315px;height:20px;line-height:20px;color:#555;border:none">10</div>
<div style="position:absolute;left:0px;top:335px;width:21px;height:1px;background:#c4c3c1"></div>
<div class="rh" style="top:335px;height:20px;line-height:20px;color:#555;border:none">11</div>
<div style="position:absolute;left:0px;top:355px;width:21px;height:1px;background:#c4c3c1"></div>
<div class="rh" style="top:355px;height:20px;line-height:20px;color:#555;border:none">12</div>
<div style="position:absolute;left:0px;top:375px;width:21px;height:1px;background:#c4c3c1"></div>
<div class="rh" style="top:375px;height:20px;line-height:20px;color:#555;border:none">13</div>
<div style="position:absolute;left:0px;top:395px;width:21px;height:1px;background:#c4c3c1"></div>
<div class="rh" style="top:395px;height:20px;line-height:20px;color:#555;border:none">14</div>
<div style="position:absolute;left:0px;top:415px;width:21px;height:1px;background:#c4c3c1"></div>
<div class="rh" style="top:415px;height:20px;line-height:20px;color:#555;border:none">15</div>
<div style="position:absolute;left:0px;top:435px;width:21px;height:1px;background:#c4c3c1"></div>
<div class="rh" style="top:435px;height:20px;line-height:20px;color:#555;border:none">16</div>
<div style="position:absolute;left:0px;top:455px;width:21px;height:1px;background:#c4c3c1"></div>
<div class="rh" style="top:455px;height:20px;line-height:20px;color:#555;border:none">17</div>
<div style="position:absolute;left:0px;top:475px;width:21px;height:1px;background:#c4c3c1"></div>
<div class="rh" style="top:475px;height:20px;line-height:20px;color:#555;border:none">18</div>
<div style="position:absolute;left:0px;top:495px;width:21px;height:1px;background:#c4c3c1"></div>
<div class="rh" style="top:495px;height:20px;line-height:20px;color:#555;border:none">19</div>
<div style="position:absolute;left:0px;top:515px;width:21px;height:1px;background:#c4c3c1"></div>
<div class="rh" style="top:515px;height:20px;line-height:20px;color:#555;border:none">20</div>
<div style="position:absolute;left:0px;top:535px;width:21px;height:1px;background:#c4c3c1"></div>
<div class="rh" style="top:535px;height:20px;line-height:20px;color:#555;border:none">21</div>
<div style="position:absolute;left:0px;top:555px;width:21px;height:1px;background:#c4c3c1"></div>
<div class="rh" style="top:555px;height:23px;line-height:23px;color:#555;border:none">22</div>
<div style="position:absolute;left:0px;top:578px;width:21px;height:1px;background:#c4c3c1"></div>
<div class="rh" style="top:578px;height:14px;line-height:14px;color:#555;border:none">23</div>
<div style="position:absolute;left:0px;top:592px;width:21px;height:1px;background:#c4c3c1"></div>
<div class="rh" style="top:592px;height:14px;line-height:14px;color:#555;border:none">24</div>
<div style="position:absolute;left:0px;top:606px;width:21px;height:1px;background:#c4c3c1"></div>
<div class="rh" style="top:606px;height:13px;line-height:13px;color:#555;border:none">25</div>
<div style="position:absolute;left:0px;top:619px;width:21px;height:1px;background:#c4c3c1"></div>
<div class="rh" style="top:619px;height:13px;line-height:13px;color:#555;border:none">26</div>
<div style="position:absolute;left:21px;top:100px;width:1px;height:532px;background:#c4c3c1"></div>
<div style="position:absolute;left:36px;top:114px;width:631px;height:55px;background:#1e3a8a"></div>
<div style="position:absolute;left:38px;top:127px;white-space:nowrap;font-size:19px;font-weight:bold;color:#fff;line-height:26px;transform-origin:left center;transform:scaleX(0.828);">PLAN <span class="sp">D'INVESTISSEMENTS</span></div>
<div style="position:absolute;left:36px;top:169px;width:631px;height:20px;background:#2563eb"></div>
<div style="position:absolute;left:38px;top:172px;white-space:nowrap;font-size:9px;font-style:italic;color:#e8efff;line-height:14px;transform-origin:left center;transform:scaleX(0.89);"><span class="sp">Période</span> : 2026 – 2030 &nbsp;| &nbsp; <span class="sp">Mis</span> à <span class="sp">jour</span> <span class="sp">le</span> 03/03/2026</div>
<div style="position:absolute;left:36px;top:209px;width:182px;height:40px;background:#dbeafe"></div>
<div style="position:absolute;left:36px;top:249px;width:182px;height:20px;background:#1e3a8a"></div>
<div style="position:absolute;left:36px;top:210px;white-space:nowrap;width:182px;text-align:center;font-size:9px;font-weight:bold;color:#1e3a8a;line-height:12px;transform:scaleX(0.83);">Budget Total</div>
<div style="position:absolute;left:36px;top:228px;white-space:nowrap;width:182px;text-align:center;font-size:12.5px;font-weight:bold;color:#1e3a8a;line-height:16px;">125 000 000 €</div>
<div style="position:absolute;left:218px;top:209px;width:152px;height:40px;background:#d1fae5"></div>
<div style="position:absolute;left:218px;top:249px;width:152px;height:20px;background:#10b981"></div>
<div style="position:absolute;left:218px;top:210px;white-space:nowrap;width:152px;text-align:center;font-size:9px;font-weight:bold;color:#22ad7c;line-height:12px;transform:scaleX(0.83);"><span class="sp">Engagé</span></div>
<div style="position:absolute;left:219.5px;top:228px;white-space:nowrap;width:152px;text-align:center;font-size:12.5px;font-weight:bold;color:#22ad7c;line-height:16px;">78 450 000 €</div>
<div style="position:absolute;left:370px;top:209px;width:154px;height:40px;background:#fef3c7"></div>
<div style="position:absolute;left:370px;top:249px;width:154px;height:20px;background:#f59e0b"></div>
<div style="position:absolute;left:370px;top:210px;white-space:nowrap;width:154px;text-align:center;font-size:9px;font-weight:bold;color:#e8a030;line-height:12px;transform:scaleX(0.83);">En <span class="sp">cours</span></div>
<div style="position:absolute;left:371.5px;top:228px;white-space:nowrap;width:154px;text-align:center;font-size:12.5px;font-weight:bold;color:#e8a030;line-height:16px;">32 100 000 €</div>
<div style="position:absolute;left:524px;top:209px;width:143px;height:40px;background:#fee2e2"></div>
<div style="position:absolute;left:524px;top:249px;width:143px;height:20px;background:#ef4444"></div>
<div style="position:absolute;left:524px;top:210px;white-space:nowrap;width:143px;text-align:center;font-size:9px;font-weight:bold;color:#d0384a;line-height:12px;transform:scaleX(0.83);"><span class="sp">Disponible</span></div>
<div style="position:absolute;left:525.5px;top:228px;white-space:nowrap;width:143px;text-align:center;font-size:12.5px;font-weight:bold;color:#d0384a;line-height:16px;">14 450 000 €</div>
<div style="position:absolute;left:36px;top:286px;width:564px;height:29px;background:#1e3a8a"></div>
<div style="position:absolute;left:37px;top:286px;width:105px;height:29px;border-right:1px solid #3b5bb5;"></div>
<div style="position:absolute;left:36px;top:286px;white-space:nowrap;width:105px;text-align:center;font-size:8.5px;font-weight:bold;color:#fff;line-height:29px;transform:scaleX(0.9);"><span class="sp">Projet</span> / <span class="sp">Programme</span></div>
<div style="position:absolute;left:142px;top:286px;width:77px;height:29px;border-right:1px solid #3b5bb5;"></div>
<div style="position:absolute;left:141px;top:286px;white-space:nowrap;width:77px;text-align:center;font-size:8.5px;font-weight:bold;color:#fff;line-height:29px;transform:scaleX(0.9);"><span class="sp">Catégorie</span></div>
<div style="position:absolute;left:219px;top:286px;width:76px;height:29px;border-right:1px solid #3b5bb5;"></div>
<div style="position:absolute;left:218px;top:286px;white-space:nowrap;width:76px;text-align:center;font-size:8.5px;font-weight:bold;color:#fff;line-height:29px;transform:scaleX(0.9);"><span class="sp">Priorité</span></div>
<div style="position:absolute;left:295px;top:286px;width:76px;height:29px;border-right:1px solid #3b5bb5;"></div>
<div style="position:absolute;left:294px;top:286px;white-space:nowrap;width:76px;text-align:center;font-size:8.5px;font-weight:bold;color:#fff;line-height:29px;transform:scaleX(0.9);">Budget (€)</div>
<div style="position:absolute;left:371px;top:286px;width:77px;height:29px;border-right:1px solid #3b5bb5;"></div>
<div style="position:absolute;left:370px;top:286px;white-space:nowrap;width:77px;text-align:center;font-size:8.5px;font-weight:bold;color:#fff;line-height:29px;transform:scaleX(0.9);"><span class="sp">Engagé</span> (€)</div>
<div style="position:absolute;left:448px;top:286px;width:77px;height:29px;border-right:1px solid #3b5bb5;"></div>
<div style="position:absolute;left:447px;top:286px;white-space:nowrap;width:77px;text-align:center;font-size:8.5px;font-weight:bold;color:#fff;line-height:29px;transform:scaleX(0.9);"><span class="sp">Avancement</span></div>
<div style="position:absolute;left:525px;top:286px;width:76px;height:29px;"></div>
<div style="position:absolute;left:524px;top:286px;white-space:nowrap;width:76px;text-align:center;font-size:8.5px;font-weight:bold;color:#fff;line-height:29px;transform:scaleX(0.9);"><span class="sp">Statut</span></div>
<div style="position:absolute;left:36px;top:316px;width:488px;height:19px;background:#ffffff"></div>
<div style="position:absolute;left:523px;top:316px;width:77.5px;height:19px;background:#d1fae5"></div>
<div style="position:absolute;left:37px;top:316px;width:105px;height:19px;border-right:1px solid #e8e9ec;border-bottom:1px solid #e8e9ec;"></div>
<div style="position:absolute;left:142px;top:316px;width:77px;height:19px;border-right:1px solid #e8e9ec;border-bottom:1px solid #e8e9ec;"></div>
<div style="position:absolute;left:219px;top:316px;width:76px;height:19px;border-right:1px solid #e8e9ec;border-bottom:1px solid #e8e9ec;"></div>
<div style="position:absolute;left:295px;top:316px;width:76px;height:19px;border-right:1px solid #e8e9ec;border-bottom:1px solid #e8e9ec;"></div>
<div style="position:absolute;left:371px;top:316px;width:77px;height:19px;border-right:1px solid #e8e9ec;border-bottom:1px solid #e8e9ec;"></div>
<div style="position:absolute;left:448px;top:316px;width:77px;height:19px;border-right:1px solid #e8e9ec;border-bottom:1px solid #e8e9ec;"></div>
<div style="position:absolute;left:37px;top:316px;white-space:nowrap;line-height:19px;font-size:8.5px;font-weight:bold;color:#1e3a8a;transform-origin:left center;transform:scaleX(0.9);"><span class="sp">Modernisation</span> SI</div>
<div style="position:absolute;left:141px;top:316px;white-space:nowrap;line-height:19px;font-size:8.5px;width:77px;text-align:center;color:#4b5563;transform:scaleX(0.94);"><span class="sp">Technologie</span></div>
<div style="position:absolute;left:218px;top:316px;white-space:nowrap;line-height:19px;font-size:8.5px;width:76px;text-align:center;font-weight:bold;color:#dc2626;transform:scaleX(0.81);">Critique</div>
<div style="position:absolute;left:294px;top:316px;white-space:nowrap;line-height:19px;font-size:8.5px;width:76px;text-align:right;color:#555;transform-origin:right center;transform:scaleX(0.9);">18,500,000 €</div>
<div style="position:absolute;left:370px;top:316px;white-space:nowrap;line-height:19px;font-size:8.5px;width:77px;text-align:right;color:#555;transform-origin:right center;transform:scaleX(0.9);">16,800,000 €</div>
<div style="position:absolute;left:447px;top:316px;white-space:nowrap;line-height:19px;font-size:8.5px;width:77px;text-align:center;font-weight:bold;color:#1e3a8a;transform:scaleX(0.85);">91%</div>
<div style="position:absolute;left:523px;top:316px;white-space:nowrap;line-height:19px;font-size:8.5px;width:78px;text-align:center;color:#10b981;transform:scaleX(0.9);"><span class="sp">Terminé</span></div>
<div style="position:absolute;left:36px;top:336px;width:488px;height:20px;background:#f3f4f6"></div>
<div style="position:absolute;left:523px;top:336px;width:77.5px;height:20px;background:#fef3c7"></div>
<div style="position:absolute;left:37px;top:336px;width:105px;height:20px;border-right:1px solid #e8e9ec;border-bottom:1px solid #e8e9ec;"></div>
<div style="position:absolute;left:142px;top:336px;width:77px;height:20px;border-right:1px solid #e8e9ec;border-bottom:1px solid #e8e9ec;"></div>
<div style="position:absolute;left:219px;top:336px;width:76px;height:20px;border-right:1px solid #e8e9ec;border-bottom:1px solid #e8e9ec;"></div>
<div style="position:absolute;left:295px;top:336px;width:76px;height:20px;border-right:1px solid #e8e9ec;border-bottom:1px solid #e8e9ec;"></div>
<div style="position:absolute;left:371px;top:336px;width:77px;height:20px;border-right:1px solid #e8e9ec;border-bottom:1px solid #e8e9ec;"></div>
<div style="position:absolute;left:448px;top:336px;width:77px;height:20px;border-right:1px solid #e8e9ec;border-bottom:1px solid #e8e9ec;"></div>
<div style="position:absolute;left:37px;top:335px;white-space:nowrap;line-height:20px;font-size:8.5px;font-weight:bold;color:#1e3a8a;transform-origin:left center;transform:scaleX(0.9);">Expansion <span class="sp">Usine</span> <span class="sp">Nord</span></div>
<div style="position:absolute;left:141px;top:335px;white-space:nowrap;line-height:20px;font-size:8.5px;width:77px;text-align:center;color:#4b5563;transform:scaleX(0.94);">Production</div>
<div style="position:absolute;left:218px;top:335px;white-space:nowrap;line-height:20px;font-size:8.5px;width:76px;text-align:center;font-weight:bold;color:#f59e0b;transform:scaleX(0.81);"><span class="sp">Haute</span></div>
<div style="position:absolute;left:294px;top:335px;white-space:nowrap;line-height:20px;font-size:8.5px;width:76px;text-align:right;color:#555;transform-origin:right center;transform:scaleX(0.9);">25,000,000 €</div>
<div style="position:absolute;left:370px;top:335px;white-space:nowrap;line-height:20px;font-size:8.5px;width:77px;text-align:right;color:#555;transform-origin:right center;transform:scaleX(0.9);">19,200,000 €</div>
<div style="position:absolute;left:447px;top:335px;white-space:nowrap;line-height:20px;font-size:8.5px;width:77px;text-align:center;font-weight:bold;color:#1e3a8a;transform:scaleX(0.85);">77%</div>
<div style="position:absolute;left:523px;top:335px;white-space:nowrap;line-height:20px;font-size:8.5px;width:78px;text-align:center;color:#f59e0b;transform:scaleX(0.9);">En <span class="sp">cours</span></div>
<div style="position:absolute;left:36px;top:356px;width:488px;height:20px;background:#ffffff"></div>
<div style="position:absolute;left:523px;top:356px;width:77.5px;height:20px;background:#fef3c7"></div>
<div style="position:absolute;left:37px;top:356px;width:105px;height:20px;border-right:1px solid #e8e9ec;border-bottom:1px solid #e8e9ec;"></div>
<div style="position:absolute;left:142px;top:356px;width:77px;height:20px;border-right:1px solid #e8e9ec;border-bottom:1px solid #e8e9ec;"></div>
<div style="position:absolute;left:219px;top:356px;width:76px;height:20px;border-right:1px solid #e8e9ec;border-bottom:1px solid #e8e9ec;"></div>
<div style="position:absolute;left:295px;top:356px;width:76px;height:20px;border-right:1px solid #e8e9ec;border-bottom:1px solid #e8e9ec;"></div>
<div style="position:absolute;left:371px;top:356px;width:77px;height:20px;border-right:1px solid #e8e9ec;border-bottom:1px solid #e8e9ec;"></div>
<div style="position:absolute;left:448px;top:356px;width:77px;height:20px;border-right:1px solid #e8e9ec;border-bottom:1px solid #e8e9ec;"></div>
<div style="position:absolute;left:37px;top:355px;white-space:nowrap;line-height:20px;font-size:8.5px;font-weight:bold;color:#1e3a8a;transform-origin:left center;transform:scaleX(0.9);"><span class="sp">Parc</span> <span class="sp">Photovoltaïque</span></div>
<div style="position:absolute;left:141px;top:355px;white-space:nowrap;line-height:20px;font-size:8.5px;width:77px;text-align:center;color:#4b5563;transform:scaleX(0.94);"><span class="sp">Énergie</span></div>
<div style="position:absolute;left:218px;top:355px;white-space:nowrap;line-height:20px;font-size:8.5px;width:76px;text-align:center;font-weight:bold;color:#f59e0b;transform:scaleX(0.81);"><span class="sp">Haute</span></div>
<div style="position:absolute;left:294px;top:355px;white-space:nowrap;line-height:20px;font-size:8.5px;width:76px;text-align:right;color:#555;transform-origin:right center;transform:scaleX(0.9);">12,000,000 €</div>
<div style="position:absolute;left:370px;top:355px;white-space:nowrap;line-height:20px;font-size:8.5px;width:77px;text-align:right;color:#555;transform-origin:right center;transform:scaleX(0.9);">8,400,000 €</div>
<div style="position:absolute;left:447px;top:355px;white-space:nowrap;line-height:20px;font-size:8.5px;width:77px;text-align:center;font-weight:bold;color:#1e3a8a;transform:scaleX(0.85);">70%</div>
<div style="position:absolute;left:523px;top:355px;white-space:nowrap;line-height:20px;font-size:8.5px;width:78px;text-align:center;color:#f59e0b;transform:scaleX(0.9);">En <span class="sp">cours</span></div>
<div style="position:absolute;left:36px;top:376px;width:488px;height:20px;background:#f3f4f6"></div>
<div style="position:absolute;left:523px;top:376px;width:77.5px;height:20px;background:#fef3c7"></div>
<div style="position:absolute;left:37px;top:376px;width:105px;height:20px;border-right:1px solid #e8e9ec;border-bottom:1px solid #e8e9ec;"></div>
<div style="position:absolute;left:142px;top:376px;width:77px;height:20px;border-right:1px solid #e8e9ec;border-bottom:1px solid #e8e9ec;"></div>
<div style="position:absolute;left:219px;top:376px;width:76px;height:20px;border-right:1px solid #e8e9ec;border-bottom:1px solid #e8e9ec;"></div>
<div style="position:absolute;left:295px;top:376px;width:76px;height:20px;border-right:1px solid #e8e9ec;border-bottom:1px solid #e8e9ec;"></div>
<div style="position:absolute;left:371px;top:376px;width:77px;height:20px;border-right:1px solid #e8e9ec;border-bottom:1px solid #e8e9ec;"></div>
<div style="position:absolute;left:448px;top:376px;width:77px;height:20px;border-right:1px solid #e8e9ec;border-bottom:1px solid #e8e9ec;"></div>
<div style="position:absolute;left:37px;top:375px;white-space:nowrap;line-height:20px;font-size:8.5px;font-weight:bold;color:#1e3a8a;transform-origin:left center;transform:scaleX(0.9);"><span class="sp">Rénovation</span> <span class="sp">Bâtiments</span></div>
<div style="position:absolute;left:141px;top:375px;white-space:nowrap;line-height:20px;font-size:8.5px;width:77px;text-align:center;color:#4b5563;transform:scaleX(0.94);"><span class="sp">Immobilier</span></div>
<div style="position:absolute;left:218px;top:375px;white-space:nowrap;line-height:20px;font-size:8.5px;width:76px;text-align:center;font-weight:bold;color:#3b82f6;transform:scaleX(0.81);"><span class="sp">Moyenne</span></div>
<div style="position:absolute;left:294px;top:375px;white-space:nowrap;line-height:20px;font-size:8.5px;width:76px;text-align:right;color:#555;transform-origin:right center;transform:scaleX(0.9);">8,500,000 €</div>
<div style="position:absolute;left:370px;top:375px;white-space:nowrap;line-height:20px;font-size:8.5px;width:77px;text-align:right;color:#555;transform-origin:right center;transform:scaleX(0.9);">6,200,000 €</div>
<div style="position:absolute;left:447px;top:375px;white-space:nowrap;line-height:20px;font-size:8.5px;width:77px;text-align:center;font-weight:bold;color:#1e3a8a;transform:scaleX(0.85);">73%</div>
<div style="position:absolute;left:523px;top:375px;white-space:nowrap;line-height:20px;font-size:8.5px;width:78px;text-align:center;color:#f59e0b;transform:scaleX(0.9);">En <span class="sp">cours</span></div>
<div style="position:absolute;left:36px;top:396px;width:488px;height:20px;background:#ffffff"></div>
<div style="position:absolute;left:523px;top:396px;width:77.5px;height:20px;background:#fef3c7"></div>
<div style="position:absolute;left:37px;top:396px;width:105px;height:20px;border-right:1px solid #e8e9ec;border-bottom:1px solid #e8e9ec;"></div>
<div style="position:absolute;left:142px;top:396px;width:77px;height:20px;border-right:1px solid #e8e9ec;border-bottom:1px solid #e8e9ec;"></div>
<div style="position:absolute;left:219px;top:396px;width:76px;height:20px;border-right:1px solid #e8e9ec;border-bottom:1px solid #e8e9ec;"></div>
<div style="position:absolute;left:295px;top:396px;width:76px;height:20px;border-right:1px solid #e8e9ec;border-bottom:1px solid #e8e9ec;"></div>
<div style="position:absolute;left:371px;top:396px;width:77px;height:20px;border-right:1px solid #e8e9ec;border-bottom:1px solid #e8e9ec;"></div>
<div style="position:absolute;left:448px;top:396px;width:77px;height:20px;border-right:1px solid #e8e9ec;border-bottom:1px solid #e8e9ec;"></div>
<div style="position:absolute;left:37px;top:395px;white-space:nowrap;line-height:20px;font-size:8.5px;font-weight:bold;color:#1e3a8a;transform-origin:left center;transform:scaleX(0.9);"><span class="sp">Automatisation</span> <span class="sp">Chaîne</span></div>
<div style="position:absolute;left:141px;top:395px;white-space:nowrap;line-height:20px;font-size:8.5px;width:77px;text-align:center;color:#4b5563;transform:scaleX(0.94);">Production</div>
<div style="position:absolute;left:218px;top:395px;white-space:nowrap;line-height:20px;font-size:8.5px;width:76px;text-align:center;font-weight:bold;color:#dc2626;transform:scaleX(0.81);">Critique</div>
<div style="position:absolute;left:294px;top:395px;white-space:nowrap;line-height:20px;font-size:8.5px;width:76px;text-align:right;color:#555;transform-origin:right center;transform:scaleX(0.9);">22,000,000 €</div>
<div style="position:absolute;left:370px;top:395px;white-space:nowrap;line-height:20px;font-size:8.5px;width:77px;text-align:right;color:#555;transform-origin:right center;transform:scaleX(0.9);">14,300,000 €</div>
<div style="position:absolute;left:447px;top:395px;white-space:nowrap;line-height:20px;font-size:8.5px;width:77px;text-align:center;font-weight:bold;color:#1e3a8a;transform:scaleX(0.85);">65%</div>
<div style="position:absolute;left:523px;top:395px;white-space:nowrap;line-height:20px;font-size:8.5px;width:78px;text-align:center;color:#f59e0b;transform:scaleX(0.9);">En <span class="sp">cours</span></div>
<div style="position:absolute;left:36px;top:415px;width:488px;height:19px;background:#f3f4f6"></div>
<div style="position:absolute;left:523px;top:415px;width:77.5px;height:19px;background:#d1fae5"></div>
<div style="position:absolute;left:37px;top:415px;width:105px;height:19px;border-right:1px solid #e8e9ec;border-bottom:1px solid #e8e9ec;"></div>
<div style="position:absolute;left:142px;top:415px;width:77px;height:19px;border-right:1px solid #e8e9ec;border-bottom:1px solid #e8e9ec;"></div>
<div style="position:absolute;left:219px;top:415px;width:76px;height:19px;border-right:1px solid #e8e9ec;border-bottom:1px solid #e8e9ec;"></div>
<div style="position:absolute;left:295px;top:415px;width:76px;height:19px;border-right:1px solid #e8e9ec;border-bottom:1px solid #e8e9ec;"></div>
<div style="position:absolute;left:371px;top:415px;width:77px;height:19px;border-right:1px solid #e8e9ec;border-bottom:1px solid #e8e9ec;"></div>
<div style="position:absolute;left:448px;top:415px;width:77px;height:19px;border-right:1px solid #e8e9ec;border-bottom:1px solid #e8e9ec;"></div>
<div style="position:absolute;left:37px;top:415px;white-space:nowrap;line-height:19px;font-size:8.5px;font-weight:bold;color:#1e3a8a;transform-origin:left center;transform:scaleX(0.9);"><span class="sp">Plateforme</span> E-commerce</div>
<div style="position:absolute;left:141px;top:415px;white-space:nowrap;line-height:19px;font-size:8.5px;width:77px;text-align:center;color:#4b5563;transform:scaleX(0.94);"><span class="sp">Technologie</span></div>
<div style="position:absolute;left:218px;top:415px;white-space:nowrap;line-height:19px;font-size:8.5px;width:76px;text-align:center;font-weight:bold;color:#f59e0b;transform:scaleX(0.81);"><span class="sp">Haute</span></div>
<div style="position:absolute;left:294px;top:415px;white-space:nowrap;line-height:19px;font-size:8.5px;width:76px;text-align:right;color:#555;transform-origin:right center;transform:scaleX(0.9);">5,500,000 €</div>
<div style="position:absolute;left:370px;top:415px;white-space:nowrap;line-height:19px;font-size:8.5px;width:77px;text-align:right;color:#555;transform-origin:right center;transform:scaleX(0.9);">4,950,000 €</div>
<div style="position:absolute;left:447px;top:415px;white-space:nowrap;line-height:19px;font-size:8.5px;width:77px;text-align:center;font-weight:bold;color:#1e3a8a;transform:scaleX(0.85);">90%</div>
<div style="position:absolute;left:523px;top:415px;white-space:nowrap;line-height:19px;font-size:8.5px;width:78px;text-align:center;color:#10b981;transform:scaleX(0.9);"><span class="sp">Terminé</span></div>
<div style="position:absolute;left:36px;top:435px;width:488px;height:20px;background:#ffffff"></div>
<div style="position:absolute;left:523px;top:435px;width:77.5px;height:20px;background:#fef3c7"></div>
<div style="position:absolute;left:37px;top:435px;width:105px;height:20px;border-right:1px solid #e8e9ec;border-bottom:1px solid #e8e9ec;"></div>
<div style="position:absolute;left:142px;top:435px;width:77px;height:20px;border-right:1px solid #e8e9ec;border-bottom:1px solid #e8e9ec;"></div>
<div style="position:absolute;left:219px;top:435px;width:76px;height:20px;border-right:1px solid #e8e9ec;border-bottom:1px solid #e8e9ec;"></div>
<div style="position:absolute;left:295px;top:435px;width:76px;height:20px;border-right:1px solid #e8e9ec;border-bottom:1px solid #e8e9ec;"></div>
<div style="position:absolute;left:371px;top:435px;width:77px;height:20px;border-right:1px solid #e8e9ec;border-bottom:1px solid #e8e9ec;"></div>
<div style="position:absolute;left:448px;top:435px;width:77px;height:20px;border-right:1px solid #e8e9ec;border-bottom:1px solid #e8e9ec;"></div>
<div style="position:absolute;left:37px;top:435px;white-space:nowrap;line-height:20px;font-size:8.5px;font-weight:bold;color:#1e3a8a;transform-origin:left center;transform:scaleX(0.9);">Formation &amp; <span class="sp">Compétences</span></div>
<div style="position:absolute;left:141px;top:435px;white-space:nowrap;line-height:20px;font-size:8.5px;width:77px;text-align:center;color:#4b5563;transform:scaleX(0.94);">RH</div>
<div style="position:absolute;left:218px;top:435px;white-space:nowrap;line-height:20px;font-size:8.5px;width:76px;text-align:center;font-weight:bold;color:#3b82f6;transform:scaleX(0.81);"><span class="sp">Moyenne</span></div>
<div style="position:absolute;left:294px;top:435px;white-space:nowrap;line-height:20px;font-size:8.5px;width:76px;text-align:right;color:#555;transform-origin:right center;transform:scaleX(0.9);">3,200,000 €</div>
<div style="position:absolute;left:370px;top:435px;white-space:nowrap;line-height:20px;font-size:8.5px;width:77px;text-align:right;color:#555;transform-origin:right center;transform:scaleX(0.9);">1,920,000 €</div>
<div style="position:absolute;left:447px;top:435px;white-space:nowrap;line-height:20px;font-size:8.5px;width:77px;text-align:center;font-weight:bold;color:#1e3a8a;transform:scaleX(0.85);">60%</div>
<div style="position:absolute;left:523px;top:435px;white-space:nowrap;line-height:20px;font-size:8.5px;width:78px;text-align:center;color:#f59e0b;transform:scaleX(0.9);">En <span class="sp">cours</span></div>
<div style="position:absolute;left:36px;top:455px;width:488px;height:20px;background:#f3f4f6"></div>
<div style="position:absolute;left:523px;top:455px;width:77.5px;height:20px;background:#dbeafe"></div>
<div style="position:absolute;left:37px;top:455px;width:105px;height:20px;border-right:1px solid #e8e9ec;border-bottom:1px solid #e8e9ec;"></div>
<div style="position:absolute;left:142px;top:455px;width:77px;height:20px;border-right:1px solid #e8e9ec;border-bottom:1px solid #e8e9ec;"></div>
<div style="position:absolute;left:219px;top:455px;width:76px;height:20px;border-right:1px solid #e8e9ec;border-bottom:1px solid #e8e9ec;"></div>
<div style="position:absolute;left:295px;top:455px;width:76px;height:20px;border-right:1px solid #e8e9ec;border-bottom:1px solid #e8e9ec;"></div>
<div style="position:absolute;left:371px;top:455px;width:77px;height:20px;border-right:1px solid #e8e9ec;border-bottom:1px solid #e8e9ec;"></div>
<div style="position:absolute;left:448px;top:455px;width:77px;height:20px;border-right:1px solid #e8e9ec;border-bottom:1px solid #e8e9ec;"></div>
<div style="position:absolute;left:37px;top:455px;white-space:nowrap;line-height:20px;font-size:8.5px;font-weight:bold;color:#1e3a8a;transform-origin:left center;transform:scaleX(0.9);"><span class="sp">Flotte</span> <span class="sp">Véhicules</span> <span class="sp">Électriques</span></div>
<div style="position:absolute;left:141px;top:455px;white-space:nowrap;line-height:20px;font-size:8.5px;width:77px;text-align:center;color:#4b5563;transform:scaleX(0.94);">Transport</div>
<div style="position:absolute;left:218px;top:455px;white-space:nowrap;line-height:20px;font-size:8.5px;width:76px;text-align:center;font-weight:bold;color:#10b981;transform:scaleX(0.81);"><span class="sp">Basse</span></div>
<div style="position:absolute;left:294px;top:455px;white-space:nowrap;line-height:20px;font-size:8.5px;width:76px;text-align:right;color:#555;transform-origin:right center;transform:scaleX(0.9);">4,800,000 €</div>
<div style="position:absolute;left:370px;top:455px;white-space:nowrap;line-height:20px;font-size:8.5px;width:77px;text-align:right;color:#555;transform-origin:right center;transform:scaleX(0.9);">2,400,000 €</div>
<div style="position:absolute;left:447px;top:455px;white-space:nowrap;line-height:20px;font-size:8.5px;width:77px;text-align:center;font-weight:bold;color:#1e3a8a;transform:scaleX(0.85);">50%</div>
<div style="position:absolute;left:523px;top:455px;white-space:nowrap;line-height:20px;font-size:8.5px;width:78px;text-align:center;color:#3b82f6;transform:scaleX(0.9);"><span class="sp">Planifié</span></div>
<div style="position:absolute;left:36px;top:475px;width:488px;height:20px;background:#ffffff"></div>
<div style="position:absolute;left:523px;top:475px;width:77.5px;height:20px;background:#fef3c7"></div>
<div style="position:absolute;left:37px;top:475px;width:105px;height:20px;border-right:1px solid #e8e9ec;border-bottom:1px solid #e8e9ec;"></div>
<div style="position:absolute;left:142px;top:475px;width:77px;height:20px;border-right:1px solid #e8e9ec;border-bottom:1px solid #e8e9ec;"></div>
<div style="position:absolute;left:219px;top:475px;width:76px;height:20px;border-right:1px solid #e8e9ec;border-bottom:1px solid #e8e9ec;"></div>
<div style="position:absolute;left:295px;top:475px;width:76px;height:20px;border-right:1px solid #e8e9ec;border-bottom:1px solid #e8e9ec;"></div>
<div style="position:absolute;left:371px;top:475px;width:77px;height:20px;border-right:1px solid #e8e9ec;border-bottom:1px solid #e8e9ec;"></div>
<div style="position:absolute;left:448px;top:475px;width:77px;height:20px;border-right:1px solid #e8e9ec;border-bottom:1px solid #e8e9ec;"></div>
<div style="position:absolute;left:37px;top:475px;white-space:nowrap;line-height:20px;font-size:8.5px;font-weight:bold;color:#1e3a8a;transform-origin:left center;transform:scaleX(0.9);">R&amp;D <span class="sp">Nouveaux</span> <span class="sp">Produits</span></div>
<div style="position:absolute;left:141px;top:475px;white-space:nowrap;line-height:20px;font-size:8.5px;width:77px;text-align:center;color:#4b5563;transform:scaleX(0.94);">Innovation</div>
<div style="position:absolute;left:218px;top:475px;white-space:nowrap;line-height:20px;font-size:8.5px;width:76px;text-align:center;font-weight:bold;color:#f59e0b;transform:scaleX(0.81);"><span class="sp">Haute</span></div>
<div style="position:absolute;left:294px;top:475px;white-space:nowrap;line-height:20px;font-size:8.5px;width:76px;text-align:right;color:#555;transform-origin:right center;transform:scaleX(0.9);">15,000,000 €</div>
<div style="position:absolute;left:370px;top:475px;white-space:nowrap;line-height:20px;font-size:8.5px;width:77px;text-align:right;color:#555;transform-origin:right center;transform:scaleX(0.9);">6,000,000 €</div>
<div style="position:absolute;left:447px;top:475px;white-space:nowrap;line-height:20px;font-size:8.5px;width:77px;text-align:center;font-weight:bold;color:#1e3a8a;transform:scaleX(0.85);">40%</div>
<div style="position:absolute;left:523px;top:475px;white-space:nowrap;line-height:20px;font-size:8.5px;width:78px;text-align:center;color:#f59e0b;transform:scaleX(0.9);">En <span class="sp">cours</span></div>
<div style="position:absolute;left:36px;top:495px;width:488px;height:20px;background:#f3f4f6"></div>
<div style="position:absolute;left:523px;top:495px;width:77.5px;height:20px;background:#fef3c7"></div>
<div style="position:absolute;left:37px;top:495px;width:105px;height:20px;border-right:1px solid #e8e9ec;border-bottom:1px solid #e8e9ec;"></div>
<div style="position:absolute;left:142px;top:495px;width:77px;height:20px;border-right:1px solid #e8e9ec;border-bottom:1px solid #e8e9ec;"></div>
<div style="position:absolute;left:219px;top:495px;width:76px;height:20px;border-right:1px solid #e8e9ec;border-bottom:1px solid #e8e9ec;"></div>
<div style="position:absolute;left:295px;top:495px;width:76px;height:20px;border-right:1px solid #e8e9ec;border-bottom:1px solid #e8e9ec;"></div>
<div style="position:absolute;left:371px;top:495px;width:77px;height:20px;border-right:1px solid #e8e9ec;border-bottom:1px solid #e8e9ec;"></div>
<div style="position:absolute;left:448px;top:495px;width:77px;height:20px;border-right:1px solid #e8e9ec;border-bottom:1px solid #e8e9ec;"></div>
<div style="position:absolute;left:37px;top:495px;white-space:nowrap;line-height:20px;font-size:8.5px;font-weight:bold;color:#1e3a8a;transform-origin:left center;transform:scaleX(0.9);">Infrastructure <span class="sp">Réseau</span></div>
<div style="position:absolute;left:141px;top:495px;white-space:nowrap;line-height:20px;font-size:8.5px;width:77px;text-align:center;color:#4b5563;transform:scaleX(0.94);"><span class="sp">Technologie</span></div>
<div style="position:absolute;left:218px;top:495px;white-space:nowrap;line-height:20px;font-size:8.5px;width:76px;text-align:center;font-weight:bold;color:#dc2626;transform:scaleX(0.81);">Critique</div>
<div style="position:absolute;left:294px;top:495px;white-space:nowrap;line-height:20px;font-size:8.5px;width:76px;text-align:right;color:#555;transform-origin:right center;transform:scaleX(0.9);">7,500,000 €</div>
<div style="position:absolute;left:370px;top:495px;white-space:nowrap;line-height:20px;font-size:8.5px;width:77px;text-align:right;color:#555;transform-origin:right center;transform:scaleX(0.9);">5,250,000 €</div>
<div style="position:absolute;left:447px;top:495px;white-space:nowrap;line-height:20px;font-size:8.5px;width:77px;text-align:center;font-weight:bold;color:#1e3a8a;transform:scaleX(0.85);">70%</div>
<div style="position:absolute;left:523px;top:495px;white-space:nowrap;line-height:20px;font-size:8.5px;width:78px;text-align:center;color:#f59e0b;transform:scaleX(0.9);">En <span class="sp">cours</span></div>
<div style="position:absolute;left:36px;top:515px;width:488px;height:20px;background:#ffffff"></div>
<div style="position:absolute;left:523px;top:515px;width:77.5px;height:20px;background:#dbeafe"></div>
<div style="position:absolute;left:37px;top:515px;width:105px;height:20px;border-right:1px solid #e8e9ec;border-bottom:1px solid #e8e9ec;"></div>
<div style="position:absolute;left:142px;top:515px;width:77px;height:20px;border-right:1px solid #e8e9ec;border-bottom:1px solid #e8e9ec;"></div>
<div style="position:absolute;left:219px;top:515px;width:76px;height:20px;border-right:1px solid #e8e9ec;border-bottom:1px solid #e8e9ec;"></div>
<div style="position:absolute;left:295px;top:515px;width:76px;height:20px;border-right:1px solid #e8e9ec;border-bottom:1px solid #e8e9ec;"></div>
<div style="position:absolute;left:371px;top:515px;width:77px;height:20px;border-right:1px solid #e8e9ec;border-bottom:1px solid #e8e9ec;"></div>
<div style="position:absolute;left:448px;top:515px;width:77px;height:20px;border-right:1px solid #e8e9ec;border-bottom:1px solid #e8e9ec;"></div>
<div style="position:absolute;left:37px;top:515px;white-space:nowrap;line-height:20px;font-size:8.5px;font-weight:bold;color:#1e3a8a;transform-origin:left center;transform:scaleX(0.9);"><span class="sp">Entrepôt</span> <span class="sp">Logistique</span></div>
<div style="position:absolute;left:141px;top:515px;white-space:nowrap;line-height:20px;font-size:8.5px;width:77px;text-align:center;color:#4b5563;transform:scaleX(0.94);"><span class="sp">Logistique</span></div>
<div style="position:absolute;left:218px;top:515px;white-space:nowrap;line-height:20px;font-size:8.5px;width:76px;text-align:center;font-weight:bold;color:#3b82f6;transform:scaleX(0.81);"><span class="sp">Moyenne</span></div>
<div style="position:absolute;left:294px;top:515px;white-space:nowrap;line-height:20px;font-size:8.5px;width:76px;text-align:right;color:#555;transform-origin:right center;transform:scaleX(0.9);">11,000,000 €</div>
<div style="position:absolute;left:370px;top:515px;white-space:nowrap;line-height:20px;font-size:8.5px;width:77px;text-align:right;color:#555;transform-origin:right center;transform:scaleX(0.9);">2,200,000 €</div>
<div style="position:absolute;left:447px;top:515px;white-space:nowrap;line-height:20px;font-size:8.5px;width:77px;text-align:center;font-weight:bold;color:#1e3a8a;transform:scaleX(0.85);">20%</div>
<div style="position:absolute;left:523px;top:515px;white-space:nowrap;line-height:20px;font-size:8.5px;width:78px;text-align:center;color:#3b82f6;transform:scaleX(0.9);"><span class="sp">Planifié</span></div>
<div style="position:absolute;left:36px;top:535px;width:488px;height:20px;background:#f3f4f6"></div>
<div style="position:absolute;left:523px;top:535px;width:77.5px;height:20px;background:#d1fae5"></div>
<div style="position:absolute;left:37px;top:535px;width:105px;height:20px;border-right:1px solid #e8e9ec;border-bottom:1px solid #e8e9ec;"></div>
<div style="position:absolute;left:142px;top:535px;width:77px;height:20px;border-right:1px solid #e8e9ec;border-bottom:1px solid #e8e9ec;"></div>
<div style="position:absolute;left:219px;top:535px;width:76px;height:20px;border-right:1px solid #e8e9ec;border-bottom:1px solid #e8e9ec;"></div>
<div style="position:absolute;left:295px;top:535px;width:76px;height:20px;border-right:1px solid #e8e9ec;border-bottom:1px solid #e8e9ec;"></div>
<div style="position:absolute;left:371px;top:535px;width:77px;height:20px;border-right:1px solid #e8e9ec;border-bottom:1px solid #e8e9ec;"></div>
<div style="position:absolute;left:448px;top:535px;width:77px;height:20px;border-right:1px solid #e8e9ec;border-bottom:1px solid #e8e9ec;"></div>
<div style="position:absolute;left:37px;top:535px;white-space:nowrap;line-height:20px;font-size:8.5px;font-weight:bold;color:#1e3a8a;transform-origin:left center;transform:scaleX(0.9);">Certification ISO</div>
<div style="position:absolute;left:141px;top:535px;white-space:nowrap;line-height:20px;font-size:8.5px;width:77px;text-align:center;color:#4b5563;transform:scaleX(0.94);"><span class="sp">Qualité</span></div>
<div style="position:absolute;left:218px;top:535px;white-space:nowrap;line-height:20px;font-size:8.5px;width:76px;text-align:center;font-weight:bold;color:#10b981;transform:scaleX(0.81);"><span class="sp">Basse</span></div>
<div style="position:absolute;left:294px;top:535px;white-space:nowrap;line-height:20px;font-size:8.5px;width:76px;text-align:right;color:#555;transform-origin:right center;transform:scaleX(0.9);">1,200,000 €</div>
<div style="position:absolute;left:370px;top:535px;white-space:nowrap;line-height:20px;font-size:8.5px;width:77px;text-align:right;color:#555;transform-origin:right center;transform:scaleX(0.9);">840,000 €</div>
<div style="position:absolute;left:447px;top:535px;white-space:nowrap;line-height:20px;font-size:8.5px;width:77px;text-align:center;font-weight:bold;color:#1e3a8a;transform:scaleX(0.85);">70%</div>
<div style="position:absolute;left:523px;top:535px;white-space:nowrap;line-height:20px;font-size:8.5px;width:78px;text-align:center;color:#10b981;transform:scaleX(0.9);"><span class="sp">Terminé</span></div>
<div style="position:absolute;left:36px;top:555px;width:564px;height:23px;background:#1e3a8a"></div>
<div style="position:absolute;left:294px;top:555px;width:1px;height:23px;background:#3b5bb5"></div>
<div style="position:absolute;left:370px;top:555px;width:1px;height:23px;background:#3b5bb5"></div>
<div style="position:absolute;left:447px;top:555px;width:1px;height:23px;background:#3b5bb5"></div>
<div style="position:absolute;left:36px;top:555px;white-space:nowrap;width:258px;text-align:center;line-height:20px;font-size:11px;font-weight:bold;color:#fff;transform:scaleX(0.85);">TOTAL</div>
<div style="position:absolute;left:294px;top:555px;white-space:nowrap;width:76px;text-align:right;line-height:20px;font-size:11px;font-weight:bold;color:#fff;transform-origin:right center;transform:scaleX(0.8);">134,200,000 €</div>
<div style="position:absolute;left:370px;top:555px;white-space:nowrap;width:77px;text-align:right;line-height:20px;font-size:11px;font-weight:bold;color:#fff;transform-origin:right center;transform:scaleX(0.8);">88,460,000 €</div>
<div style="position:absolute;left:447px;top:555px;white-space:nowrap;width:77px;text-align:center;line-height:20px;font-size:11px;font-weight:bold;color:#fff;transform:scaleX(0.85);">65%</div>
<div style="position:absolute;left:36px;top:114px;width:1px;height:518px;background:#6e6e6e"></div>
<div style="position:absolute;left:0px;top:314px;width:1151px;height:2px;background:#8a8a8a"></div>
<div style="position:absolute;left:1151px;top:100px;width:10px;height:532px;background:#cfcfcf"></div>
<div style="position:absolute;left:1153px;top:102px;width:6px;height:246px;background:#818181;border-radius:3px"></div>
<div style="position:absolute;left:0px;top:632px;width:1151px;height:10px;background:#cfcfcf"></div>
<div style="position:absolute;left:2px;top:634px;width:544px;height:6px;background:#818181;border-radius:3px"></div>
<div style="position:absolute;left:1161px;top:71px;width:1px;height:587px;background:#d9d7d4"></div>
<div style="position:absolute;left:1161px;top:339px;width:4px;height:50px;background:#9b9b9b"></div>
<svg style="position:absolute;left:1161px;top:361px;" width="4" height="6" viewBox="0 0 4 6"><path d="M0.5 0.5L3.5 3L0.5 5.5Z" fill="#fff"/></svg>
<svg style="position:absolute;left:1176px;top:80px;" width="11" height="9" viewBox="0 0 11 9"><rect x="0" y="0.5" width="11" height="1.6" fill="#333"/><rect x="0" y="3.7" width="11" height="1.6" fill="#333"/><rect x="0" y="6.9" width="11" height="1.6" fill="#333"/></svg>
<svg style="position:absolute;left:1173px;top:107px;" width="16" height="16" viewBox="0 0 16 16"><rect x="1.5" y="1.5" width="13" height="13" fill="#fff" stroke="#555" stroke-width="0.9"/><rect x="1.5" y="1.5" width="13" height="1.8" fill="#444"/><path d="M4 7.5H12M4 10.5H12" stroke="#3a8fd8" stroke-width="0.9"/><path d="M9.5 6V9M6.5 9V12" stroke="#3a8fd8" stroke-width="0.9"/></svg>
<svg style="position:absolute;left:1173px;top:136px;" width="16" height="16" viewBox="0 0 16 16"><path d="M1 11L5 1H6L10 11M2.5 7.5H8.5" fill="none" stroke="#333" stroke-width="1.2"/><path d="M14.5 6L8.5 12C7 13.5 6 14.5 4 15C5 13 6 12 7.5 11L13.5 5Z" fill="#fff" stroke="#3a8fd8"/></svg>
<svg style="position:absolute;left:1173px;top:165px;" width="16" height="16" viewBox="0 0 16 16"><path d="M1 2.5H6L7.5 4H14V13.5H1Z" fill="#f5c26b" stroke="#e2a33a"/><rect x="6" y="7" width="9" height="8" fill="#fff" stroke="#1e60b0"/><path d="M6.5 14.5L9 11L11 13L13 10.5L14.5 12.5V14.5Z" fill="#3a8fd8"/></svg>
<svg style="position:absolute;left:1173px;top:194px;" width="16" height="16" viewBox="0 0 16 16"><circle cx="8" cy="8" r="6.5" fill="none" stroke="#444" stroke-width="1"/><path d="M11 5L7 7L5 11L9 9Z" fill="#3a8fd8"/></svg>
<div style="position:absolute;left:1174px;top:221px;font-family:'Liberation Serif',serif;font-style:italic;font-size:17px;color:#3a8fd8;line-height:20px;letter-spacing:0px">f<span style="font-size:14px">x</span></div>
<div style="position:absolute;left:0px;top:642px;width:1161px;height:16px;background:#f5f4f3"></div>
<svg style="position:absolute;left:5px;top:643px;" width="62" height="14" viewBox="0 0 62 14"><g fill="none" stroke="#cdcdcd" stroke-width="0.9"><path d="M1.5 1V13M3.5 1V13M11 2L5 7L11 12L11 9.5L8 7L11 4.5Z"/><path d="M13 4V10M15 4V10M22 3L17 7L22 11ZM28 3L23 7L28 11Z"/><path d="M34 3L39 7L34 11ZM40 3L45 7L40 11ZM47 4V10M49 4V10"/><path d="M51 2L57 7L51 12L51 9.5L54 7L51 4.5ZM58.5 1V13M60.5 1V13"/></g></svg>
<div style="position:absolute;left:75px;top:645px;width:10px;height:12px;background:#fff;border:1px solid #dcdcdc;border-bottom:none"></div>
<svg style="position:absolute;left:77px;top:646px;" width="8" height="8" viewBox="0 0 8 8"><circle cx="4" cy="4" r="3" fill="#3a8fd8"/><path d="M4 2.2V5.8M2.2 4H5.8" stroke="#fff" stroke-width="0.9"/></svg>
<div style="position:absolute;left:92px;top:642px;width:81px;height:15px;background:#fff"></div>
<div style="position:absolute;left:92px;top:656px;width:81px;height:2px;background:#1e3a8a"></div>
<div style="position:absolute;left:92px;top:642px;white-space:nowrap;width:81px;text-align:center;font-size:8.5px;font-weight:bold;color:#222;line-height:14px;">Tableau de Bord</div>
<div style="position:absolute;left:173px;top:642px;width:73px;height:15.5px;background:#3b82f6"></div>
<div style="position:absolute;left:173px;top:642px;white-space:nowrap;width:73px;text-align:center;font-size:8.5px;color:#fff;line-height:14px;transform:scaleX(0.94);">Plan Financier</div>
<div style="position:absolute;left:246px;top:642px;width:65px;height:15.5px;background:#10b981"></div>
<div style="position:absolute;left:246px;top:642px;white-space:nowrap;width:65px;text-align:center;font-size:8.5px;color:#fff;line-height:14px;transform:scaleX(0.94);">Suivi Projets</div>
<div style="position:absolute;left:311px;top:642px;width:47px;height:15.5px;background:#f59e0b"></div>
<div style="position:absolute;left:311px;top:642px;white-space:nowrap;width:47px;text-align:center;font-size:8.5px;color:#222;line-height:14px;transform:scaleX(0.94);">Analyse</div>
<div style="position:absolute;left:358px;top:642px;width:78px;height:15.5px;background:#2563eb"></div>
<div style="position:absolute;left:358px;top:642px;white-space:nowrap;width:78px;text-align:center;font-size:8.5px;color:#fff;line-height:14px;transform:scaleX(0.94);">Nouveau Projet</div>
<div style="position:absolute;left:436px;top:642px;width:66px;height:15.5px;background:#334155"></div>
<div style="position:absolute;left:436px;top:642px;white-space:nowrap;width:66px;text-align:center;font-size:8.5px;color:#fff;line-height:14px;transform:scaleX(0.94);">Instructions</div>
<div style="position:absolute;left:0px;top:658px;width:1200px;height:17px;background:#f5f4f3;border-top:1px solid #dcdad7"></div>
<svg style="position:absolute;left:5px;top:661px;" width="13" height="12" viewBox="0 0 13 12"><rect x="0.5" y="0.5" width="12" height="11" rx="1" fill="none" stroke="#9a9a9a"/><rect x="3" y="0.5" width="7" height="4" fill="none" stroke="#9a9a9a"/><rect x="3" y="7" width="7" height="4.5" fill="none" stroke="#9a9a9a"/></svg>
<div style="position:absolute;left:27px;top:661px;white-space:nowrap;font-size:8.5px;color:#3a3a3a;line-height:12px;">Sheet 1 of 6</div>
<div style="position:absolute;left:189px;top:660px;width:1px;height:12px;background:#e0dedb"></div>
<div style="position:absolute;left:355.5px;top:660px;width:1px;height:12px;background:#e0dedb"></div>
<div style="position:absolute;left:583.5px;top:660px;width:1px;height:12px;background:#e0dedb"></div>
<div style="position:absolute;left:762.5px;top:660px;width:1px;height:12px;background:#e0dedb"></div>
<div style="position:absolute;left:808.5px;top:660px;width:1px;height:12px;background:#e0dedb"></div>
<div style="position:absolute;left:838px;top:660px;width:1px;height:12px;background:#e0dedb"></div>
<div style="position:absolute;left:858.5px;top:660px;width:1px;height:12px;background:#e0dedb"></div>
<div style="position:absolute;left:878px;top:660px;width:1px;height:12px;background:#e0dedb"></div>
<div style="position:absolute;left:1071px;top:660px;width:1px;height:12px;background:#e0dedb"></div>
<div style="position:absolute;left:361.5px;top:661px;white-space:nowrap;font-size:8.5px;color:#3a3a3a;line-height:12px;">PageStyle_Tableau de Bord</div>
<div style="position:absolute;left:648.5px;top:661px;white-space:nowrap;font-size:8.5px;color:#3a3a3a;line-height:12px;">English (USA)</div>
<svg style="position:absolute;left:815px;top:664px;" width="12" height="8" viewBox="0 0 12 8"><rect x="0.5" y="0.5" width="11" height="6.5" fill="#eef4f8" stroke="#5b9bd0"/></svg>
<svg style="position:absolute;left:829px;top:661px;" width="5" height="12" viewBox="0 0 5 12"><path d="M0.5 0.5H4.5M2.5 0.5V11.5M0.5 11.5H4.5" stroke="#333"/></svg>
<div style="position:absolute;left:943.5px;top:661px;white-space:nowrap;font-size:8.5px;color:#3a3a3a;line-height:12px;">Average: ; Sum: 0</div>
<div style="position:absolute;left:1078px;top:667px;width:6px;height:1.3px;background:#333"></div>
<div style="position:absolute;left:1088px;top:667px;width:64px;height:1px;background:#9a9a9a"></div>
<div style="position:absolute;left:1118px;top:663px;width:3.5px;height:8px;background:#fff;border:1px solid #555"></div>
<svg style="position:absolute;left:1155px;top:663px;" width="9" height="9" viewBox="0 0 9 9"><path d="M4.5 0.5V8.5M0.5 4.5H8.5" stroke="#333" stroke-width="1.3"/></svg>
<div style="position:absolute;left:1173px;top:661px;white-space:nowrap;font-size:8.5px;color:#3a3a3a;line-height:12px;">100%</div>
</div></body></html>
